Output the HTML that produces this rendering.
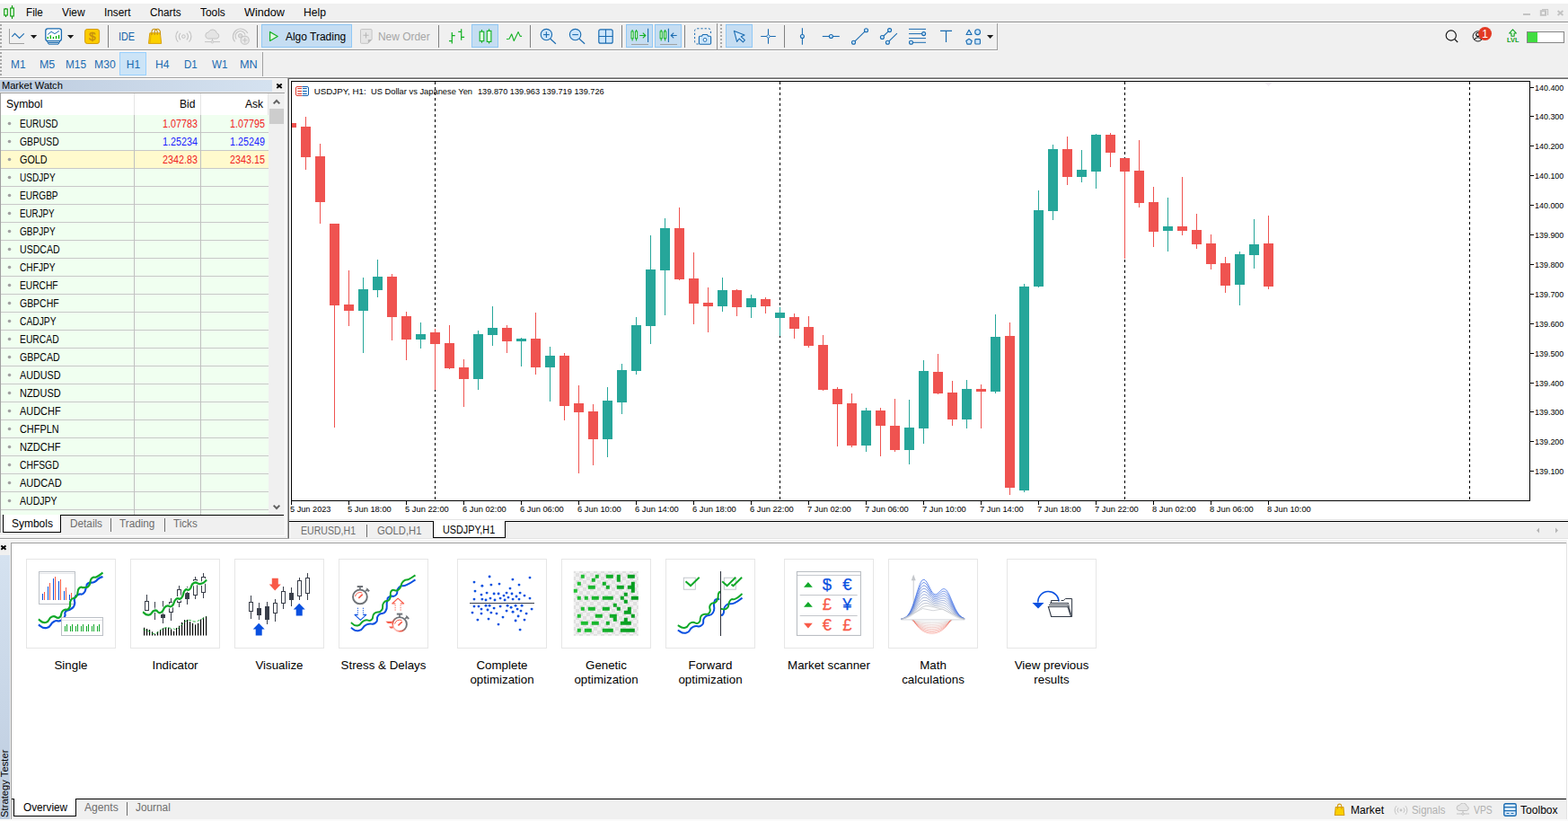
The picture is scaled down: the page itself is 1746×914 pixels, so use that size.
<!DOCTYPE html>
<html lang="en"><head><meta charset="utf-8"><title>MetaTrader 5 - USDJPY,H1</title>
<style>
html,body{margin:0;padding:0}
body{width:1746px;height:914px;overflow:hidden;background:#f0f0f0;position:relative;font-family:"Liberation Sans",sans-serif;}
.r{position:absolute;display:block;overflow:hidden}
.t{position:absolute;white-space:pre;line-height:1;transform-origin:0 0;}
</style></head>
<body>
<div class="r" style="left:0px;top:0px;width:1746px;height:4px;background:#fff;"></div>
<div class="r" style="left:0px;top:24px;width:1746px;height:1px;background:#8e8e8e;"></div>
<div class="r" style="left:0px;top:25px;width:1746px;height:1px;background:#fff;"></div>
<div class="r" style="left:0px;top:55px;width:1111px;height:1px;background:#9a9a9a;"></div>
<div class="r" style="left:0px;top:56px;width:1111px;height:1px;background:#fff;"></div>
<div class="r" style="left:0px;top:85px;width:1746px;height:1px;background:#f7f7f7;"></div>
<div class="r" style="left:0px;top:86px;width:1746px;height:1px;background:#a0a0a0;"></div>
<div class="r" style="left:0px;top:87px;width:320px;height:1px;background:#fff;"></div>
<div class="r" style="left:321px;top:87px;width:1425px;height:1px;background:#696969;"></div>
<svg class="r" style="left:0px;top:0px;" width="20" height="24" viewBox="0 0 20 24"><path d="M6.5 9v1M6.5 17v2M13.5 6v3M13.5 18v3" stroke="#0a9a0a" stroke-width="1.1" fill="none"/><rect x="4.7" y="10" width="3.6" height="7" fill="#e6fbe6" stroke="#0a9a0a" stroke-width="1.1"/><rect x="11.7" y="9" width="3.6" height="9" fill="#e6fbe6" stroke="#0a9a0a" stroke-width="1.1"/></svg>
<span class="t" style="left:29.10px;top:8.24px;font-size:12px;color:#000;transform:scaleX(0.9722);">File</span>
<span class="t" style="left:69.20px;top:8.24px;font-size:12px;color:#000;transform:scaleX(0.9925);">View</span>
<span class="t" style="left:116.20px;top:8.24px;font-size:12px;color:#000;transform:scaleX(0.9863);">Insert</span>
<span class="t" style="left:167.30px;top:8.24px;font-size:12px;color:#000;transform:scaleX(0.9789);">Charts</span>
<span class="t" style="left:223.30px;top:8.24px;font-size:12px;color:#000;transform:scaleX(0.9923);">Tools</span>
<span class="t" style="left:272.10px;top:8.24px;font-size:12px;color:#000;transform:scaleX(1.0543);">Window</span>
<span class="t" style="left:338.40px;top:8.24px;font-size:12px;color:#000;transform:scaleX(1.0129);">Help</span>
<svg class="r" style="left:1696px;top:9px;" width="48" height="10" viewBox="0 0 48 10"><rect x="0" y="6" width="8" height="2" fill="#c3c3c3"/><path d="M21 1.5h6.5v6.5" fill="none" stroke="#c3c3c3" stroke-width="1.2"/><rect x="19.8" y="3.2" width="5.2" height="4.6" fill="none" stroke="#c3c3c3" stroke-width="2"/><path d="M38.6 3l5.8 5M44.4 3l-5.8 5" stroke="#c3c3c3" stroke-width="2" fill="none"/></svg>
<svg class="r" style="left:0px;top:27px;" width="2" height="28" viewBox="0 0 2 28"><rect x="0" y="0" width="2" height="2" fill="#a8a8a8"/><rect x="0" y="4" width="2" height="2" fill="#a8a8a8"/><rect x="0" y="8" width="2" height="2" fill="#a8a8a8"/><rect x="0" y="12" width="2" height="2" fill="#a8a8a8"/><rect x="0" y="16" width="2" height="2" fill="#a8a8a8"/><rect x="0" y="20" width="2" height="2" fill="#a8a8a8"/><rect x="0" y="24" width="2" height="2" fill="#a8a8a8"/></svg>
<svg class="r" style="left:802px;top:27px;" width="2" height="28" viewBox="0 0 2 28"><rect x="0" y="0" width="2" height="2" fill="#a8a8a8"/><rect x="0" y="4" width="2" height="2" fill="#a8a8a8"/><rect x="0" y="8" width="2" height="2" fill="#a8a8a8"/><rect x="0" y="12" width="2" height="2" fill="#a8a8a8"/><rect x="0" y="16" width="2" height="2" fill="#a8a8a8"/><rect x="0" y="20" width="2" height="2" fill="#a8a8a8"/><rect x="0" y="24" width="2" height="2" fill="#a8a8a8"/></svg>
<div class="r" style="left:291px;top:27px;width:101px;height:26px;background:#c5ddf2;box-sizing:border-box;border:1px solid #90c8f6;"></div>
<div class="r" style="left:525px;top:27px;width:30px;height:26px;background:#c5ddf2;box-sizing:border-box;border:1px solid #90c8f6;"></div>
<div class="r" style="left:697px;top:27px;width:30px;height:26px;background:#c5ddf2;box-sizing:border-box;border:1px solid #90c8f6;"></div>
<div class="r" style="left:729px;top:27px;width:30px;height:26px;background:#c5ddf2;box-sizing:border-box;border:1px solid #90c8f6;"></div>
<div class="r" style="left:808px;top:27px;width:30px;height:26px;background:#c5ddf2;box-sizing:border-box;border:1px solid #90c8f6;"></div>
<div class="r" style="left:120px;top:28px;width:1px;height:25px;background:#808080;"></div>
<div class="r" style="left:286px;top:28px;width:1px;height:25px;background:#808080;"></div>
<div class="r" style="left:488px;top:28px;width:1px;height:25px;background:#808080;"></div>
<div class="r" style="left:590px;top:28px;width:1px;height:25px;background:#808080;"></div>
<div class="r" style="left:692px;top:28px;width:1px;height:25px;background:#808080;"></div>
<div class="r" style="left:762px;top:28px;width:1px;height:25px;background:#808080;"></div>
<div class="r" style="left:873px;top:28px;width:1px;height:25px;background:#808080;"></div>
<div class="r" style="left:798px;top:26px;width:1px;height:29px;background:#909090;"></div>
<div class="r" style="left:1110px;top:26px;width:1px;height:29px;background:#a0a0a0;"></div>
<svg class="r" style="left:0;top:26px" width="1746" height="30" viewBox="0 26 1746 30"><path d="M10.5 32v16.5H27" fill="none" stroke="#a0a0a0" stroke-width="1.0"/><path d="M13.3 40.8l3.2-3.4 5.1 5.1 5.2-5.1" fill="none" stroke="#1a6bb0" stroke-width="1.1"/><path d="M34 39h7.2l-3.6 4z" fill="#1a1a1a"/><rect x="50.8" y="31.8" width="17.6" height="13.8" rx="2.6" fill="#fff" stroke="#1a6bb0" stroke-width="1.3"/><path d="M52.3 45.8l1.9 3.4h10.8l1.9-3.4M53.2 47.5h12.8" fill="none" stroke="#1a6bb0" stroke-width="1.0"/><path d="M53.2 38.5l3.8-3.2 4 2.3 4.9-3.2" fill="none" stroke="#1a6bb0" stroke-width="1.0"/><rect x="52.6" y="41" width="1.3" height="2.2" fill="#00b000"/><rect x="55.6" y="39.3" width="1.3" height="3.9" fill="#00b000"/><rect x="58.8" y="41" width="1.3" height="2.2" fill="#00b000"/><rect x="61.9" y="40" width="1.3" height="3.2" fill="#00b000"/><rect x="64.9" y="38.9" width="1.3" height="4.3" fill="#00b000"/><path d="M75 39h7.2l-3.6 4z" fill="#1a1a1a"/><rect x="94.6" y="32.5" width="16" height="16" rx="2.6" fill="#fbcc00" stroke="#d39b12" stroke-width="1.0"/><path d="M166.8 36.8h11.6l1.3 11.6h-14.2z" fill="#fbd000" stroke="#d8a010" stroke-width="1.0"/><path d="M168.3 37l-1.3 11.4" stroke="#e8b400" stroke-width="1.0"/><path d="M169 39v-3.4a3.1 3.3 0 0 1 6.2 0V39M172.2 39v-3.4a3.1 3.3 0 0 1 6.2 0V39" fill="none" stroke="#c8920e" stroke-width="1.1"/><circle cx="204.4" cy="40.6" r="1.8" fill="none" stroke="#c0c0c0" stroke-width="1.0"/><path d="M201 36.8a5.2 5.2 0 0 0 0 7.6M207.8 36.8a5.2 5.2 0 0 1 0 7.6M198.3 34.6a8.6 8.6 0 0 0 0 12M210.5 34.6a8.6 8.6 0 0 1 0 12" fill="none" stroke="#c0c0c0" stroke-width="1.1"/><path d="M231.6 43a3.6 3.6 0 0 1 .5-7.1 4.9 4.9 0 0 1 9.3 1 3.1 3.1 0 0 1-.4 6.1z" fill="#e4e4e4" stroke="#c4c4c4" stroke-width="1.0"/><path d="M236.5 43v3.4M228 46.6h17" stroke="#c4c4c4" stroke-width="1.0"/><circle cx="236.5" cy="46.6" r="1.4" fill="#e4e4e4" stroke="#c4c4c4" stroke-width="0.8"/><circle cx="267.6" cy="39.8" r="2.2" fill="#dcdcdc" stroke="#c4c4c4" stroke-width="1.0"/><path d="M263.2 43.6a5.6 5.6 0 1 1 9.8-5M261.6 46.4a8.6 8.6 0 1 1 14.2-9.4" fill="none" stroke="#c4c4c4" stroke-width="1.1"/><circle cx="272.7" cy="44.7" r="4.6" fill="#e8e8e8" stroke="#c4c4c4" stroke-width="1.1"/><path d="M270 44.7h5.4M272.7 42v5.4" stroke="#c4c4c4" stroke-width="1.1"/><path d="M300.6 35.4l8.6 5-8.6 5z" fill="#e2f6e2" stroke="#10b020" stroke-width="1.2" stroke-linejoin="round"/><path d="M402.5 32.6h10.6a1 1 0 0 1 1 1v10.4l-4.2 4.3h-7.4a1 1 0 0 1-1-1v-13.7a1 1 0 0 1 1-1z" fill="#e6e6e6" stroke="#c4c4c4" stroke-width="1.0"/><path d="M414 44l-4.2 4.3V44z" fill="#b8b8b8"/><path d="M404.4 39.3h6.2M407.5 36.2v6.2" stroke="#b8b8b8" stroke-width="1.1"/><path d="M503.3 36v12.6M500 45.7h3.3M503.3 39.7h3.4M513.7 32.2v12.6M510.3 35.3h3.4M513.7 41.4h3.4" fill="none" stroke="#10b020" stroke-width="1.2"/><path d="M536.5 33v14.7M544.6 32.2v16.4" stroke="#10b020" stroke-width="1.1"/><rect x="534.2" y="35.2" width="4.6" height="10.5" fill="#e0fbe0" stroke="#10b020" stroke-width="1.1"/><rect x="542.3" y="34.4" width="4.6" height="12" fill="#e0fbe0" stroke="#10b020" stroke-width="1.1"/><path d="M564 43.5l3 -.3 2.7-5.3 2.6 7.6 4.8-9.9 2 4.5 2 .3" fill="none" stroke="#10b020" stroke-width="1.1" stroke-linejoin="round"/><path d="M612.9 43.3l6 5.4" stroke="#1a6bb0" stroke-width="1.2"/><circle cx="608.4" cy="38.6" r="6.2" fill="#cde6fb" stroke="#1a6bb0" stroke-width="1.1"/><path d="M605.1 38.6h6.6" stroke="#1a6bb0" stroke-width="1.1"/><path d="M608.4 35.3v6.6" stroke="#1a6bb0" stroke-width="1.1"/><path d="M645.1 43.3l6 5.4" stroke="#1a6bb0" stroke-width="1.2"/><circle cx="640.6" cy="38.6" r="6.2" fill="#cde6fb" stroke="#1a6bb0" stroke-width="1.1"/><path d="M637.3000000000001 38.6h6.6" stroke="#1a6bb0" stroke-width="1.1"/><rect x="666.8" y="32.8" width="15.4" height="15.4" rx="2" fill="#cde6fb" stroke="#1a6bb0" stroke-width="1.2"/><path d="M674.5 33v15M667 40.5h15" stroke="#1a6bb0" stroke-width="1.1"/><path d="M704.1 33v12.5M708.6 33v12.5" stroke="#10b020" stroke-width="1"/><rect x="703.0" y="35" width="2.2" height="7.8" fill="#e0fbe0" stroke="#10b020" stroke-width="0.95"/><rect x="707.5" y="35" width="2.2" height="7.8" fill="#e0fbe0" stroke="#10b020" stroke-width="0.95"/><path d="M712.3 39.5h6.3M715.8 36.6l3 2.9-3 2.9" fill="none" stroke="#10b020" stroke-width="1.1"/><path d="M721.6 31.8v15.2" stroke="#1a6bb0" stroke-width="1.1"/><path d="M703 49.5h19" stroke="#a0a0a0" stroke-width="1.0"/><path d="M736.2 33v12.5M740.6 33v12.5" stroke="#10b020" stroke-width="1"/><rect x="735.1" y="35" width="2.2" height="7.8" fill="#e0fbe0" stroke="#10b020" stroke-width="0.95"/><rect x="739.5" y="35" width="2.2" height="7.8" fill="#e0fbe0" stroke="#10b020" stroke-width="0.95"/><path d="M744.4 31.8v15.2" stroke="#1a6bb0" stroke-width="1.1"/><path d="M747.2 39.5h6.5M750.2 36.6l-3 2.9 3 2.9" fill="none" stroke="#1a6bb0" stroke-width="1.1"/><path d="M735 49.5h19" stroke="#a0a0a0" stroke-width="1.0"/><path d="M777.6 49h-1.6a2.4 2.4 0 0 1-2.4-2.4v-12.4a2.4 2.4 0 0 1 2.4-2.4h13a2.4 2.4 0 0 1 2.4 2.4v3.6" fill="none" stroke="#1a6bb0" stroke-width="1.0" stroke-dasharray="2.2 2"/><path d="M779.6 49.2a1.2 1.2 0 0 1-1.2-1.2v-6.6a1.2 1.2 0 0 1 1.2-1.2h1.8l1.3-1.7h4.6l1.3 1.7h1.8a1.2 1.2 0 0 1 1.2 1.2v6.6a1.2 1.2 0 0 1-1.2 1.2z" fill="#cde6fb" stroke="#1a6bb0" stroke-width="1.1"/><circle cx="785" cy="44.4" r="1.9" fill="#fff" stroke="#1a6bb0" stroke-width="1.0"/><path d="M817.4 34.4l3.2 12 2.6-3.4 4.2 3.8 2-2.2-4.2-3.8 3.8-1.8z" fill="#cde6fb" stroke="#1a6bb0" stroke-width="1.1" stroke-linejoin="round"/><path d="M847.2 40.5h16.6M855.5 32.2v16.6" stroke="#1a6bb0" stroke-width="1.1"/><path d="M855.5 38.3l2.2 2.2-2.2 2.2-2.2-2.2z" fill="#cde6fb" stroke="#1a6bb0" stroke-width="1.0"/><path d="M893.4 31.2v18.6" stroke="#1a6bb0" stroke-width="1.1"/><circle cx="893.4" cy="40.5" r="2" fill="#cde6fb" stroke="#1a6bb0" stroke-width="1.1"/><path d="M915.8 40.5h19" stroke="#1a6bb0" stroke-width="1.1"/><circle cx="925.4" cy="40.5" r="2" fill="#cde6fb" stroke="#1a6bb0" stroke-width="1.1"/><path d="M950.5 47.3l14-13.6" stroke="#1a6bb0" stroke-width="1.1"/><circle cx="950.5" cy="47.3" r="2" fill="#cde6fb" stroke="#1a6bb0" stroke-width="1.1"/><circle cx="964.5" cy="33.7" r="2" fill="#cde6fb" stroke="#1a6bb0" stroke-width="1.1"/><path d="M982.4 41.5l8.2-7.9M988.4 47.3l10.5-10.1" stroke="#1a6bb0" stroke-width="1.1"/><circle cx="982.4" cy="41.5" r="2" fill="#cde6fb" stroke="#1a6bb0" stroke-width="1.1"/><circle cx="990.6" cy="33.6" r="2" fill="#cde6fb" stroke="#1a6bb0" stroke-width="1.1"/><circle cx="988.4" cy="47.3" r="2" fill="#cde6fb" stroke="#1a6bb0" stroke-width="1.1"/><path d="M1012 32.4h19M1012 37.6h19M1012 42.6h19M1012 47.3h19" stroke="#1a6bb0" stroke-width="1.0"/><circle cx="1028.6" cy="37.6" r="2" fill="#cde6fb" stroke="#1a6bb0" stroke-width="1.1"/><circle cx="1014.5" cy="47.3" r="2" fill="#cde6fb" stroke="#1a6bb0" stroke-width="1.1"/><path d="M1047 34.4h13M1053.5 34.4v12.6" stroke="#1a6bb0" stroke-width="1.2"/><path d="M1079 33.2l3 5.3h-6z" fill="#cde6fb" stroke="#1a6bb0" stroke-width="1.1" stroke-linejoin="round"/><circle cx="1088.6" cy="35.7" r="2.9" fill="#cde6fb" stroke="#1a6bb0" stroke-width="1.1"/><path d="M1079 43.2l3.2 2.3-1.2 3.6h-4l-1.2-3.6z" fill="#cde6fb" stroke="#1a6bb0" stroke-width="1.1" stroke-linejoin="round"/><rect x="1085.8" y="43.6" width="5.6" height="5.4" rx=".8" fill="#cde6fb" stroke="#1a6bb0" stroke-width="1.1"/><path d="M1099 39h7.2l-3.6 4z" fill="#1a1a1a"/><circle cx="1615.8" cy="39.5" r="5.6" fill="none" stroke="#111" stroke-width="1.1"/><path d="M1619.8 43.6l3.4 3.4" stroke="#111" stroke-width="1.2"/><circle cx="1645.7" cy="40.4" r="5.6" fill="none" stroke="#111" stroke-width="1.0"/><circle cx="1645.7" cy="38.5" r="2" fill="none" stroke="#111" stroke-width="1.1"/><path d="M1641.6 44.2a4.6 4.6 0 0 1 8.2 0" fill="none" stroke="#111" stroke-width="1.1"/><circle cx="1653.6" cy="37.5" r="7.4" fill="#e23a24"/><path d="M1684.5 32.8l3.9 4.2h-2.3v3.2h-3.2V37h-2.3z" fill="#e0fbe0" stroke="#10a020" stroke-width="1.1" stroke-linejoin="round"/><rect x="1700.5" y="35.5" width="41" height="12" fill="#fff" stroke="#858585" stroke-width="1.0"/><rect x="1701" y="36" width="11" height="11" fill="#40dd40"/></svg>
<span class="t" style="left:98.95px;top:33.91px;font-size:13.5px;color:#c58c10;-webkit-text-stroke:0.35px #c58c10;">$</span>
<span class="t" style="left:131.80px;top:34.64px;font-size:12px;color:#1563a8;transform:scaleX(0.9048);">IDE</span>
<span class="t" style="left:317.90px;top:34.64px;font-size:12px;color:#000;">Algo Trading</span>
<span class="t" style="left:421.40px;top:34.64px;font-size:12px;color:#a6a6a6;transform:scaleX(0.9946);">New Order</span>
<span class="t" style="left:1650.26px;top:31.74px;font-size:12px;color:#fff;">1</span>
<span class="t" style="left:1678.20px;top:40.99px;font-size:8px;color:#10a020;transform:scaleX(0.9231);font-weight:bold;">LVL</span>
<svg class="r" style="left:0px;top:58px;" width="2" height="28" viewBox="0 0 2 28"><rect x="0" y="0" width="2" height="2" fill="#a8a8a8"/><rect x="0" y="4" width="2" height="2" fill="#a8a8a8"/><rect x="0" y="8" width="2" height="2" fill="#a8a8a8"/><rect x="0" y="12" width="2" height="2" fill="#a8a8a8"/><rect x="0" y="16" width="2" height="2" fill="#a8a8a8"/><rect x="0" y="20" width="2" height="2" fill="#a8a8a8"/><rect x="0" y="24" width="2" height="2" fill="#a8a8a8"/></svg>
<div class="r" style="left:133px;top:58px;width:30px;height:26px;background:#cce4f7;box-sizing:border-box;border:1px solid #99d1ff;"></div>
<span class="t" style="left:12.20px;top:65.64px;font-size:12px;color:#1a6bb0;transform:scaleX(0.9958);">M1</span>
<span class="t" style="left:43.85px;top:65.64px;font-size:12px;color:#1a6bb0;transform:scaleX(1.0378);">M5</span>
<span class="t" style="left:73.00px;top:65.64px;font-size:12px;color:#1a6bb0;transform:scaleX(0.9852);">M15</span>
<span class="t" style="left:104.65px;top:65.64px;font-size:12px;color:#1a6bb0;transform:scaleX(1.0152);">M30</span>
<span class="t" style="left:140.85px;top:65.64px;font-size:12px;color:#1a6bb0;">H1</span>
<span class="t" style="left:172.75px;top:65.64px;font-size:12px;color:#1a6bb0;transform:scaleX(1.0104);">H4</span>
<span class="t" style="left:205.10px;top:65.64px;font-size:12px;color:#1a6bb0;transform:scaleX(0.9648);">D1</span>
<span class="t" style="left:235.80px;top:65.64px;font-size:12px;color:#1a6bb0;transform:scaleX(0.9667);">W1</span>
<span class="t" style="left:266.60px;top:65.64px;font-size:12px;color:#1a6bb0;transform:scaleX(1.0609);">MN</span>
<div class="r" style="left:292px;top:58px;width:1px;height:27px;background:#a0a0a0;"></div>
<div class="r" style="left:322px;top:88px;width:1424px;height:490px;background:#fff;"></div>
<svg class="r" style="left:322px;top:88px;shape-rendering:crispEdges;" width="1424" height="490" viewBox="0 0 1424 490"><line x1="162.5" y1="3" x2="162.5" y2="469" stroke="#000" stroke-width="1" stroke-dasharray="3 3"/><line x1="546.5" y1="3" x2="546.5" y2="469" stroke="#000" stroke-width="1" stroke-dasharray="3 3"/><line x1="930.5" y1="3" x2="930.5" y2="469" stroke="#000" stroke-width="1" stroke-dasharray="3 3"/><line x1="1314.5" y1="3" x2="1314.5" y2="469" stroke="#000" stroke-width="1" stroke-dasharray="3 3"/><rect x="3" y="49" width="5" height="5" fill="#ef5350"/><rect x="18" y="42" width="1" height="59" fill="#ef5350"/><rect x="13" y="53" width="11" height="34" fill="#ef5350"/><rect x="34" y="72" width="1" height="89" fill="#ef5350"/><rect x="29" y="86" width="11" height="51" fill="#ef5350"/><rect x="50" y="161" width="1" height="227" fill="#ef5350"/><rect x="45" y="161" width="11" height="91" fill="#ef5350"/><rect x="66" y="213" width="1" height="62" fill="#ef5350"/><rect x="61" y="251" width="11" height="7" fill="#ef5350"/><rect x="82" y="221" width="1" height="84" fill="#26a69a"/><rect x="77" y="234" width="11" height="24" fill="#26a69a"/><rect x="98" y="201" width="1" height="42" fill="#26a69a"/><rect x="93" y="220" width="11" height="15" fill="#26a69a"/><rect x="114" y="217" width="1" height="74" fill="#ef5350"/><rect x="109" y="220" width="11" height="45" fill="#ef5350"/><rect x="130" y="259" width="1" height="54" fill="#ef5350"/><rect x="125" y="264" width="11" height="26" fill="#ef5350"/><rect x="146" y="271" width="1" height="29" fill="#26a69a"/><rect x="141" y="284" width="11" height="6" fill="#26a69a"/><rect x="162" y="278" width="1" height="68" fill="#ef5350"/><rect x="157" y="282" width="11" height="13" fill="#ef5350"/><rect x="178" y="274" width="1" height="49" fill="#ef5350"/><rect x="173" y="294" width="11" height="28" fill="#ef5350"/><rect x="194" y="312" width="1" height="53" fill="#ef5350"/><rect x="189" y="321" width="11" height="13" fill="#ef5350"/><rect x="210" y="280" width="1" height="66" fill="#26a69a"/><rect x="205" y="284" width="11" height="50" fill="#26a69a"/><rect x="226" y="253" width="1" height="44" fill="#26a69a"/><rect x="221" y="277" width="11" height="8" fill="#26a69a"/><rect x="242" y="274" width="1" height="31" fill="#ef5350"/><rect x="237" y="277" width="11" height="15" fill="#ef5350"/><rect x="258" y="288" width="1" height="32" fill="#26a69a"/><rect x="253" y="289" width="11" height="3" fill="#26a69a"/><rect x="274" y="260" width="1" height="69" fill="#ef5350"/><rect x="269" y="289" width="11" height="32" fill="#ef5350"/><rect x="290" y="298" width="1" height="61" fill="#26a69a"/><rect x="285" y="308" width="11" height="13" fill="#26a69a"/><rect x="306" y="305" width="1" height="75" fill="#ef5350"/><rect x="301" y="308" width="11" height="56" fill="#ef5350"/><rect x="322" y="341" width="1" height="98" fill="#ef5350"/><rect x="317" y="361" width="11" height="10" fill="#ef5350"/><rect x="338" y="362" width="1" height="68" fill="#ef5350"/><rect x="333" y="370" width="11" height="31" fill="#ef5350"/><rect x="354" y="343" width="1" height="78" fill="#26a69a"/><rect x="349" y="358" width="11" height="43" fill="#26a69a"/><rect x="370" y="317" width="1" height="56" fill="#26a69a"/><rect x="365" y="324" width="11" height="36" fill="#26a69a"/><rect x="386" y="265" width="1" height="64" fill="#26a69a"/><rect x="381" y="274" width="11" height="51" fill="#26a69a"/><rect x="402" y="174" width="1" height="121" fill="#26a69a"/><rect x="397" y="212" width="11" height="63" fill="#26a69a"/><rect x="418" y="155" width="1" height="108" fill="#26a69a"/><rect x="413" y="166" width="11" height="47" fill="#26a69a"/><rect x="434" y="143" width="1" height="81" fill="#ef5350"/><rect x="429" y="166" width="11" height="57" fill="#ef5350"/><rect x="450" y="193" width="1" height="80" fill="#ef5350"/><rect x="445" y="222" width="11" height="28" fill="#ef5350"/><rect x="466" y="232" width="1" height="50" fill="#ef5350"/><rect x="461" y="249" width="11" height="4" fill="#ef5350"/><rect x="482" y="221" width="1" height="38" fill="#26a69a"/><rect x="477" y="235" width="11" height="18" fill="#26a69a"/><rect x="498" y="234" width="1" height="30" fill="#ef5350"/><rect x="493" y="235" width="11" height="19" fill="#ef5350"/><rect x="514" y="240" width="1" height="26" fill="#26a69a"/><rect x="509" y="244" width="11" height="10" fill="#26a69a"/><rect x="530" y="243" width="1" height="18" fill="#ef5350"/><rect x="525" y="245" width="11" height="8" fill="#ef5350"/><rect x="546" y="254" width="1" height="32" fill="#26a69a"/><rect x="541" y="260" width="11" height="6" fill="#26a69a"/><rect x="562" y="261" width="1" height="28" fill="#ef5350"/><rect x="557" y="265" width="11" height="13" fill="#ef5350"/><rect x="578" y="264" width="1" height="35" fill="#ef5350"/><rect x="573" y="276" width="11" height="21" fill="#ef5350"/><rect x="594" y="285" width="1" height="62" fill="#ef5350"/><rect x="589" y="296" width="11" height="50" fill="#ef5350"/><rect x="610" y="343" width="1" height="66" fill="#ef5350"/><rect x="605" y="345" width="11" height="17" fill="#ef5350"/><rect x="626" y="350" width="1" height="60" fill="#ef5350"/><rect x="621" y="361" width="11" height="47" fill="#ef5350"/><rect x="642" y="366" width="1" height="49" fill="#26a69a"/><rect x="637" y="369" width="11" height="39" fill="#26a69a"/><rect x="658" y="366" width="1" height="54" fill="#ef5350"/><rect x="653" y="369" width="11" height="17" fill="#ef5350"/><rect x="674" y="356" width="1" height="59" fill="#ef5350"/><rect x="669" y="386" width="11" height="27" fill="#ef5350"/><rect x="690" y="357" width="1" height="72" fill="#26a69a"/><rect x="685" y="388" width="11" height="25" fill="#26a69a"/><rect x="706" y="313" width="1" height="93" fill="#26a69a"/><rect x="701" y="325" width="11" height="64" fill="#26a69a"/><rect x="722" y="306" width="1" height="45" fill="#ef5350"/><rect x="717" y="326" width="11" height="24" fill="#ef5350"/><rect x="738" y="336" width="1" height="50" fill="#ef5350"/><rect x="733" y="349" width="11" height="30" fill="#ef5350"/><rect x="754" y="335" width="1" height="54" fill="#26a69a"/><rect x="749" y="345" width="11" height="34" fill="#26a69a"/><rect x="770" y="340" width="1" height="49" fill="#ef5350"/><rect x="765" y="345" width="11" height="3" fill="#ef5350"/><rect x="786" y="262" width="1" height="88" fill="#26a69a"/><rect x="781" y="287" width="11" height="61" fill="#26a69a"/><rect x="802" y="271" width="1" height="192" fill="#ef5350"/><rect x="797" y="286" width="11" height="169" fill="#ef5350"/><rect x="818" y="228" width="1" height="232" fill="#26a69a"/><rect x="813" y="231" width="11" height="227" fill="#26a69a"/><rect x="834" y="124" width="1" height="108" fill="#26a69a"/><rect x="829" y="146" width="11" height="85" fill="#26a69a"/><rect x="850" y="73" width="1" height="84" fill="#26a69a"/><rect x="845" y="78" width="11" height="69" fill="#26a69a"/><rect x="866" y="64" width="1" height="54" fill="#ef5350"/><rect x="861" y="78" width="11" height="31" fill="#ef5350"/><rect x="882" y="79" width="1" height="36" fill="#26a69a"/><rect x="877" y="101" width="11" height="8" fill="#26a69a"/><rect x="898" y="61" width="1" height="61" fill="#26a69a"/><rect x="893" y="62" width="11" height="41" fill="#26a69a"/><rect x="914" y="60" width="1" height="38" fill="#ef5350"/><rect x="909" y="62" width="11" height="20" fill="#ef5350"/><rect x="930" y="88" width="1" height="112" fill="#ef5350"/><rect x="925" y="88" width="11" height="15" fill="#ef5350"/><rect x="946" y="68" width="1" height="75" fill="#ef5350"/><rect x="941" y="102" width="11" height="36" fill="#ef5350"/><rect x="962" y="120" width="1" height="67" fill="#ef5350"/><rect x="957" y="137" width="11" height="33" fill="#ef5350"/><rect x="978" y="132" width="1" height="60" fill="#26a69a"/><rect x="973" y="164" width="11" height="5" fill="#26a69a"/><rect x="994" y="109" width="1" height="65" fill="#ef5350"/><rect x="989" y="164" width="11" height="5" fill="#ef5350"/><rect x="1010" y="150" width="1" height="39" fill="#ef5350"/><rect x="1005" y="168" width="11" height="16" fill="#ef5350"/><rect x="1026" y="173" width="1" height="39" fill="#ef5350"/><rect x="1021" y="183" width="11" height="23" fill="#ef5350"/><rect x="1042" y="198" width="1" height="40" fill="#ef5350"/><rect x="1037" y="205" width="11" height="25" fill="#ef5350"/><rect x="1058" y="192" width="1" height="60" fill="#26a69a"/><rect x="1053" y="195" width="11" height="34" fill="#26a69a"/><rect x="1074" y="156" width="1" height="55" fill="#26a69a"/><rect x="1069" y="184" width="11" height="12" fill="#26a69a"/><rect x="1090" y="152" width="1" height="82" fill="#ef5350"/><rect x="1085" y="183" width="11" height="48" fill="#ef5350"/><path d="M1087 4h7l-3.5 4z" fill="#f4eff6"/><rect x="2.5" y="2.5" width="1379" height="467" fill="none" stroke="#000" stroke-width="1"/><rect x="1382" y="9" width="4" height="1" fill="#000"/><rect x="1382" y="41" width="4" height="1" fill="#000"/><rect x="1382" y="74" width="4" height="1" fill="#000"/><rect x="1382" y="107" width="4" height="1" fill="#000"/><rect x="1382" y="140" width="4" height="1" fill="#000"/><rect x="1382" y="173" width="4" height="1" fill="#000"/><rect x="1382" y="206" width="4" height="1" fill="#000"/><rect x="1382" y="239" width="4" height="1" fill="#000"/><rect x="1382" y="272" width="4" height="1" fill="#000"/><rect x="1382" y="305" width="4" height="1" fill="#000"/><rect x="1382" y="338" width="4" height="1" fill="#000"/><rect x="1382" y="370" width="4" height="1" fill="#000"/><rect x="1382" y="403" width="4" height="1" fill="#000"/><rect x="1382" y="436" width="4" height="1" fill="#000"/><rect x="2" y="470" width="1" height="4" fill="#000"/><rect x="66" y="470" width="1" height="4" fill="#000"/><rect x="130" y="470" width="1" height="4" fill="#000"/><rect x="194" y="470" width="1" height="4" fill="#000"/><rect x="258" y="470" width="1" height="4" fill="#000"/><rect x="322" y="470" width="1" height="4" fill="#000"/><rect x="386" y="470" width="1" height="4" fill="#000"/><rect x="450" y="470" width="1" height="4" fill="#000"/><rect x="514" y="470" width="1" height="4" fill="#000"/><rect x="578" y="470" width="1" height="4" fill="#000"/><rect x="642" y="470" width="1" height="4" fill="#000"/><rect x="706" y="470" width="1" height="4" fill="#000"/><rect x="770" y="470" width="1" height="4" fill="#000"/><rect x="834" y="470" width="1" height="4" fill="#000"/><rect x="898" y="470" width="1" height="4" fill="#000"/><rect x="962" y="470" width="1" height="4" fill="#000"/><rect x="1026" y="470" width="1" height="4" fill="#000"/><rect x="1090" y="470" width="1" height="4" fill="#000"/></svg>
<span class="t" style="left:1709.30px;top:92.71px;font-size:9.8px;color:#000;transform:scaleX(0.9118);">140.400</span>
<span class="t" style="left:1709.30px;top:124.71px;font-size:9.8px;color:#000;transform:scaleX(0.9118);">140.300</span>
<span class="t" style="left:1709.30px;top:157.71px;font-size:9.8px;color:#000;transform:scaleX(0.9118);">140.200</span>
<span class="t" style="left:1709.30px;top:190.71px;font-size:9.8px;color:#000;transform:scaleX(0.9118);">140.100</span>
<span class="t" style="left:1709.30px;top:223.71px;font-size:9.8px;color:#000;transform:scaleX(0.9118);">140.000</span>
<span class="t" style="left:1709.30px;top:256.71px;font-size:9.8px;color:#000;transform:scaleX(0.9118);">139.900</span>
<span class="t" style="left:1709.30px;top:289.71px;font-size:9.8px;color:#000;transform:scaleX(0.9118);">139.800</span>
<span class="t" style="left:1709.30px;top:322.71px;font-size:9.8px;color:#000;transform:scaleX(0.9118);">139.700</span>
<span class="t" style="left:1709.30px;top:355.71px;font-size:9.8px;color:#000;transform:scaleX(0.9118);">139.600</span>
<span class="t" style="left:1709.30px;top:388.71px;font-size:9.8px;color:#000;transform:scaleX(0.9118);">139.500</span>
<span class="t" style="left:1709.30px;top:421.71px;font-size:9.8px;color:#000;transform:scaleX(0.9118);">139.400</span>
<span class="t" style="left:1709.30px;top:453.71px;font-size:9.8px;color:#000;transform:scaleX(0.9118);">139.300</span>
<span class="t" style="left:1709.30px;top:486.71px;font-size:9.8px;color:#000;transform:scaleX(0.9118);">139.200</span>
<span class="t" style="left:1709.30px;top:519.71px;font-size:9.8px;color:#000;transform:scaleX(0.9118);">139.100</span>
<span class="t" style="left:323.30px;top:561.81px;font-size:9.8px;color:#000;transform:scaleX(0.9382);">5 Jun 2023</span>
<span class="t" style="left:387.30px;top:561.81px;font-size:9.8px;color:#000;transform:scaleX(0.9527);">5 Jun 18:00</span>
<span class="t" style="left:451.30px;top:561.81px;font-size:9.8px;color:#000;transform:scaleX(0.9527);">5 Jun 22:00</span>
<span class="t" style="left:515.30px;top:561.81px;font-size:9.8px;color:#000;transform:scaleX(0.9527);">6 Jun 02:00</span>
<span class="t" style="left:579.30px;top:561.81px;font-size:9.8px;color:#000;transform:scaleX(0.9527);">6 Jun 06:00</span>
<span class="t" style="left:643.30px;top:561.81px;font-size:9.8px;color:#000;transform:scaleX(0.9527);">6 Jun 10:00</span>
<span class="t" style="left:707.30px;top:561.81px;font-size:9.8px;color:#000;transform:scaleX(0.9527);">6 Jun 14:00</span>
<span class="t" style="left:771.30px;top:561.81px;font-size:9.8px;color:#000;transform:scaleX(0.9527);">6 Jun 18:00</span>
<span class="t" style="left:835.30px;top:561.81px;font-size:9.8px;color:#000;transform:scaleX(0.9527);">6 Jun 22:00</span>
<span class="t" style="left:899.30px;top:561.81px;font-size:9.8px;color:#000;transform:scaleX(0.9527);">7 Jun 02:00</span>
<span class="t" style="left:963.30px;top:561.81px;font-size:9.8px;color:#000;transform:scaleX(0.9527);">7 Jun 06:00</span>
<span class="t" style="left:1027.30px;top:561.81px;font-size:9.8px;color:#000;transform:scaleX(0.9527);">7 Jun 10:00</span>
<span class="t" style="left:1091.30px;top:561.81px;font-size:9.8px;color:#000;transform:scaleX(0.9527);">7 Jun 14:00</span>
<span class="t" style="left:1155.30px;top:561.81px;font-size:9.8px;color:#000;transform:scaleX(0.9527);">7 Jun 18:00</span>
<span class="t" style="left:1219.30px;top:561.81px;font-size:9.8px;color:#000;transform:scaleX(0.9527);">7 Jun 22:00</span>
<span class="t" style="left:1283.30px;top:561.81px;font-size:9.8px;color:#000;transform:scaleX(0.9527);">8 Jun 02:00</span>
<span class="t" style="left:1347.30px;top:561.81px;font-size:9.8px;color:#000;transform:scaleX(0.9527);">8 Jun 06:00</span>
<span class="t" style="left:1411.30px;top:561.81px;font-size:9.8px;color:#000;transform:scaleX(0.9527);">8 Jun 10:00</span>
<svg class="r" style="left:329px;top:96px;" width="15" height="11" viewBox="0 0 15 11"><rect x="1" y="1" width="13" height="9" fill="#fff"/><rect x="2" y="2" width="5.5" height="7" fill="#fdeee8"/><rect x="7.5" y="2" width="5.5" height="7" fill="#d8f1ff"/><path d="M7.5 0.5H2A1.5 1.5 0 0 0 .5 2v7A1.5 1.5 0 0 0 2 10.5H7.5" fill="none" stroke="#e03c32"/><path d="M7.5 0.5H13A1.5 1.5 0 0 1 14.5 2v7A1.5 1.5 0 0 1 13 10.5H7.5" fill="none" stroke="#1160b0"/><path d="M2.3 2.5h4.7M2.3 5.5h4.7M2.3 8.5h4.7" stroke="#e03c32" stroke-width="1"/><path d="M8 2.5h4.7M8 5.5h4.7M8 8.5h4.7" stroke="#1160b0" stroke-width="1"/></svg>
<span class="t" style="left:349.70px;top:97.31px;font-size:9.8px;color:#000;">USDJPY, H1:</span>
<span class="t" style="left:412.60px;top:97.31px;font-size:9.8px;color:#000;transform:scaleX(0.9523);">US Dollar vs Japanese Yen</span>
<span class="t" style="left:532.10px;top:97.31px;font-size:9.8px;color:#000;transform:scaleX(0.9388);">139.870 139.963 139.719 139.726</span>
<div class="r" style="left:322px;top:578px;width:1424px;height:1px;background:#e3e3e3;"></div>
<div class="r" style="left:322px;top:579px;width:1424px;height:1px;background:#fff;"></div>
<div class="r" style="left:322px;top:581px;width:1424px;height:18px;background:#f0f0f0;"></div>
<div class="r" style="left:322px;top:581px;width:1px;height:18px;background:#fff;"></div>
<div class="r" style="left:322px;top:580px;width:1424px;height:1px;background:#000;"></div>
<div class="r" style="left:482px;top:580px;width:81px;height:19px;background:#fff;box-sizing:border-box;border:1px solid #000;border-top:none;"></div>
<span class="t" style="left:334.90px;top:584.54px;font-size:12px;color:#6d6d6d;transform:scaleX(0.8796);">EURUSD,H1</span>
<div class="r" style="left:408px;top:584px;width:1px;height:14px;background:#6d6d6d;"></div>
<span class="t" style="left:420.20px;top:584.54px;font-size:12px;color:#6d6d6d;transform:scaleX(0.9377);">GOLD,H1</span>
<span class="t" style="left:493.30px;top:584.04px;font-size:12px;color:#000;transform:scaleX(0.9027);">USDJPY,H1</span>
<svg class="r" style="left:1710px;top:587px;" width="26" height="8" viewBox="0 0 26 8"><path d="M4 0.5v6L1 3.5z M22 0.5v6l3-3z" fill="#b4b4b4"/></svg>
<div class="r" style="left:322px;top:599px;width:1424px;height:1px;background:#e3e3e3;"></div>
<div class="r" style="left:0px;top:89px;width:303px;height:13px;background:linear-gradient(90deg,#bdccdf,#d5e2f0);"></div>
<span class="t" style="left:2.20px;top:89.53px;font-size:11px;color:#000;transform:scaleX(1.0053);">Market Watch</span>
<svg class="r" style="left:307px;top:92px;" width="8" height="8" viewBox="0 0 8 8"><path d="M1.3 1.5l5.4 4.4M6.7 1.5l-5.4 4.4" stroke="#000" stroke-width="1.9"/></svg>
<div class="r" style="left:0px;top:103px;width:317px;height:1px;background:#a0a0a0;"></div>
<div class="r" style="left:0px;top:103px;width:1px;height:490px;background:#a0a0a0;"></div>
<div class="r" style="left:1px;top:104px;width:298px;height:24px;background:#fff;"></div>
<div class="r" style="left:149px;top:104px;width:1px;height:24px;background:#e5e5e5;"></div>
<div class="r" style="left:223px;top:104px;width:1px;height:24px;background:#e5e5e5;"></div>
<div class="r" style="left:298px;top:104px;width:1px;height:24px;background:#e5e5e5;"></div>
<span class="t" style="left:7.10px;top:109.84px;font-size:12px;color:#000;transform:scaleX(1.0096);">Symbol</span>
<span class="t" style="left:200.40px;top:109.84px;font-size:12px;color:#000;transform:scaleX(1.0090);">Bid</span>
<span class="t" style="left:273.00px;top:109.84px;font-size:12px;color:#000;">Ask</span>
<div class="r" style="left:1px;top:128px;width:298px;height:445px;background:#f0fff0;"></div>
<div class="r" style="left:1px;top:168px;width:298px;height:19px;background:#fffacd;"></div>
<svg class="r" style="left:1px;top:128px;" width="298" height="445" viewBox="0 0 298 445"><rect x="0" y="19" width="298" height="1" fill="#c8c8c8"/><rect x="0" y="39" width="298" height="1" fill="#c8c8c8"/><rect x="0" y="59" width="298" height="1" fill="#c8c8c8"/><rect x="0" y="79" width="298" height="1" fill="#c8c8c8"/><rect x="0" y="99" width="298" height="1" fill="#c8c8c8"/><rect x="0" y="119" width="298" height="1" fill="#c8c8c8"/><rect x="0" y="139" width="298" height="1" fill="#c8c8c8"/><rect x="0" y="159" width="298" height="1" fill="#c8c8c8"/><rect x="0" y="179" width="298" height="1" fill="#c8c8c8"/><rect x="0" y="199" width="298" height="1" fill="#c8c8c8"/><rect x="0" y="219" width="298" height="1" fill="#c8c8c8"/><rect x="0" y="239" width="298" height="1" fill="#c8c8c8"/><rect x="0" y="259" width="298" height="1" fill="#c8c8c8"/><rect x="0" y="279" width="298" height="1" fill="#c8c8c8"/><rect x="0" y="299" width="298" height="1" fill="#c8c8c8"/><rect x="0" y="319" width="298" height="1" fill="#c8c8c8"/><rect x="0" y="339" width="298" height="1" fill="#c8c8c8"/><rect x="0" y="359" width="298" height="1" fill="#c8c8c8"/><rect x="0" y="379" width="298" height="1" fill="#c8c8c8"/><rect x="0" y="399" width="298" height="1" fill="#c8c8c8"/><rect x="0" y="419" width="298" height="1" fill="#c8c8c8"/><rect x="0" y="439" width="298" height="1" fill="#c8c8c8"/><rect x="148" y="0" width="1" height="445" fill="#c0c0c0"/><rect x="222" y="0" width="1" height="445" fill="#c0c0c0"/><circle cx="9.5" cy="9.5" r="1.8" fill="#a0a0a0"/><circle cx="9.5" cy="29.5" r="1.8" fill="#a0a0a0"/><circle cx="9.5" cy="49.5" r="1.8" fill="#a0a0a0"/><circle cx="9.5" cy="69.5" r="1.8" fill="#a0a0a0"/><circle cx="9.5" cy="89.5" r="1.8" fill="#a0a0a0"/><circle cx="9.5" cy="109.5" r="1.8" fill="#a0a0a0"/><circle cx="9.5" cy="129.5" r="1.8" fill="#a0a0a0"/><circle cx="9.5" cy="149.5" r="1.8" fill="#a0a0a0"/><circle cx="9.5" cy="169.5" r="1.8" fill="#a0a0a0"/><circle cx="9.5" cy="189.5" r="1.8" fill="#a0a0a0"/><circle cx="9.5" cy="209.5" r="1.8" fill="#a0a0a0"/><circle cx="9.5" cy="229.5" r="1.8" fill="#a0a0a0"/><circle cx="9.5" cy="249.5" r="1.8" fill="#a0a0a0"/><circle cx="9.5" cy="269.5" r="1.8" fill="#a0a0a0"/><circle cx="9.5" cy="289.5" r="1.8" fill="#a0a0a0"/><circle cx="9.5" cy="309.5" r="1.8" fill="#a0a0a0"/><circle cx="9.5" cy="329.5" r="1.8" fill="#a0a0a0"/><circle cx="9.5" cy="349.5" r="1.8" fill="#a0a0a0"/><circle cx="9.5" cy="369.5" r="1.8" fill="#a0a0a0"/><circle cx="9.5" cy="389.5" r="1.8" fill="#a0a0a0"/><circle cx="9.5" cy="409.5" r="1.8" fill="#a0a0a0"/><circle cx="9.5" cy="429.5" r="1.8" fill="#a0a0a0"/></svg>
<span class="t" style="left:21.80px;top:131.74px;font-size:12px;color:#000;transform:scaleX(0.8407);">EURUSD</span>
<span class="t" style="left:180.80px;top:131.74px;font-size:12px;color:#f02020;transform:scaleX(0.8968);">1.07783</span>
<span class="t" style="left:256.00px;top:131.74px;font-size:12px;color:#f02020;transform:scaleX(0.8968);">1.07795</span>
<span class="t" style="left:21.80px;top:151.74px;font-size:12px;color:#000;transform:scaleX(0.8603);">GBPUSD</span>
<span class="t" style="left:180.80px;top:151.74px;font-size:12px;color:#1a1aff;transform:scaleX(0.8968);">1.25234</span>
<span class="t" style="left:256.00px;top:151.74px;font-size:12px;color:#1a1aff;transform:scaleX(0.8968);">1.25249</span>
<span class="t" style="left:21.80px;top:171.74px;font-size:12px;color:#000;transform:scaleX(0.8998);">GOLD</span>
<span class="t" style="left:180.80px;top:171.74px;font-size:12px;color:#f02020;transform:scaleX(0.8968);">2342.83</span>
<span class="t" style="left:256.00px;top:171.74px;font-size:12px;color:#f02020;transform:scaleX(0.8968);">2343.15</span>
<span class="t" style="left:21.80px;top:191.74px;font-size:12px;color:#000;transform:scaleX(0.8364);">USDJPY</span>
<span class="t" style="left:21.80px;top:211.74px;font-size:12px;color:#000;transform:scaleX(0.8406);">EURGBP</span>
<span class="t" style="left:21.80px;top:231.74px;font-size:12px;color:#000;transform:scaleX(0.8153);">EURJPY</span>
<span class="t" style="left:21.80px;top:251.74px;font-size:12px;color:#000;transform:scaleX(0.8363);">GBPJPY</span>
<span class="t" style="left:21.80px;top:271.74px;font-size:12px;color:#000;transform:scaleX(0.8801);">USDCAD</span>
<span class="t" style="left:21.80px;top:291.74px;font-size:12px;color:#000;transform:scaleX(0.8485);">CHFJPY</span>
<span class="t" style="left:21.80px;top:311.74px;font-size:12px;color:#000;transform:scaleX(0.8520);">EURCHF</span>
<span class="t" style="left:21.80px;top:331.74px;font-size:12px;color:#000;transform:scaleX(0.8719);">GBPCHF</span>
<span class="t" style="left:21.80px;top:351.74px;font-size:12px;color:#000;transform:scaleX(0.8575);">CADJPY</span>
<span class="t" style="left:21.80px;top:371.74px;font-size:12px;color:#000;transform:scaleX(0.8604);">EURCAD</span>
<span class="t" style="left:21.80px;top:391.74px;font-size:12px;color:#000;transform:scaleX(0.8800);">GBPCAD</span>
<span class="t" style="left:21.80px;top:411.74px;font-size:12px;color:#000;transform:scaleX(0.8999);">AUDUSD</span>
<span class="t" style="left:21.80px;top:431.74px;font-size:12px;color:#000;transform:scaleX(0.9120);">NZDUSD</span>
<span class="t" style="left:21.80px;top:451.74px;font-size:12px;color:#000;transform:scaleX(0.9120);">AUDCHF</span>
<span class="t" style="left:21.80px;top:471.74px;font-size:12px;color:#000;transform:scaleX(0.9082);">CHFPLN</span>
<span class="t" style="left:21.80px;top:491.74px;font-size:12px;color:#000;transform:scaleX(0.9245);">NZDCHF</span>
<span class="t" style="left:21.80px;top:511.74px;font-size:12px;color:#000;transform:scaleX(0.8605);">CHFSGD</span>
<span class="t" style="left:21.80px;top:531.74px;font-size:12px;color:#000;transform:scaleX(0.9196);">AUDCAD</span>
<span class="t" style="left:21.80px;top:551.74px;font-size:12px;color:#000;transform:scaleX(0.8786);">AUDJPY</span>
<div class="r" style="left:299px;top:104px;width:18px;height:469px;background:#f0f0f0;"></div>
<div class="r" style="left:300px;top:121px;width:16px;height:17px;background:#cdcdcd;"></div>
<svg class="r" style="left:303px;top:109px;" width="10" height="8" viewBox="0 0 10 8"><path d="M1.7 6.4L5 3l3.3 3.4" fill="none" stroke="#606060" stroke-width="2"/></svg>
<svg class="r" style="left:303px;top:561px;" width="10" height="8" viewBox="0 0 10 8"><path d="M1.7 1.6L5 5l3.3-3.4" fill="none" stroke="#606060" stroke-width="2"/></svg>
<div class="r" style="left:68px;top:573px;width:248px;height:1px;background:#000;"></div>
<div class="r" style="left:3px;top:573px;width:65px;height:20px;background:#fff;box-sizing:border-box;border:1px solid #000;border-top:none;"></div>
<span class="t" style="left:12.90px;top:576.64px;font-size:12px;color:#000;">Symbols</span>
<span class="t" style="left:77.90px;top:576.64px;font-size:12px;color:#6d6d6d;transform:scaleX(0.9814);">Details</span>
<div class="r" style="left:123px;top:577px;width:1px;height:15px;background:#6d6d6d;"></div>
<span class="t" style="left:133.20px;top:576.64px;font-size:12px;color:#6d6d6d;transform:scaleX(0.9765);">Trading</span>
<div class="r" style="left:183px;top:577px;width:1px;height:15px;background:#6d6d6d;"></div>
<span class="t" style="left:193.10px;top:576.64px;font-size:12px;color:#6d6d6d;transform:scaleX(0.9691);">Ticks</span>
<div class="r" style="left:317px;top:103px;width:1px;height:494px;background:#fff;"></div>
<div class="r" style="left:319px;top:87px;width:1px;height:512px;background:#f9f9f9;"></div>
<div class="r" style="left:320px;top:86px;width:1px;height:514px;background:#a0a0a0;"></div>
<div class="r" style="left:321px;top:87px;width:1px;height:513px;background:#696969;"></div>
<div class="r" style="left:0px;top:596px;width:318px;height:1px;background:#fff;"></div>
<div class="r" style="left:0px;top:599px;width:322px;height:1px;background:#a0a0a0;"></div>
<div class="r" style="left:0px;top:600px;width:1746px;height:1px;background:#fff;"></div>
<div class="r" style="left:0px;top:601px;width:1746px;height:3px;background:#f2f2f2;"></div>
<div class="r" style="left:0px;top:604px;width:12px;height:310px;background:#f0f0f0;"></div>
<div class="r" style="left:0px;top:618px;width:11px;height:296px;background:linear-gradient(180deg,#d5e2f0,#bdccdf);"></div>
<svg class="r" style="left:0px;top:606px;" width="8" height="8" viewBox="0 0 8 8"><path d="M1.3 1.5l5.2 4.2M6.5 1.5l-5.2 4.2" stroke="#000" stroke-width="1.9"/></svg>
<div class="r" style="left:12px;top:604px;width:1732px;height:286px;background:#fff;box-sizing:border-box;border-top:1px solid #a0a0a0;border-left:1px solid #a0a0a0;"></div>
<div class="r" style="left:1744px;top:604px;width:1px;height:308px;background:#e3e3e3;"></div>
<div class="r" style="left:1745px;top:600px;width:1px;height:314px;background:#fff;"></div>
<div class="r" style="left:12px;top:889px;width:1732px;height:23px;background:#f0f0f0;"></div>
<div class="r" style="left:12px;top:604px;width:1px;height:308px;background:#a0a0a0;"></div>
<div class="r" style="left:13px;top:889px;width:1731px;height:1px;background:#000;"></div>
<div class="r" style="left:15px;top:889px;width:70px;height:20px;background:#fff;box-sizing:border-box;border:1px solid #000;border-top:none;"></div>
<span class="t" style="left:25.70px;top:892.94px;font-size:12px;color:#000;transform:scaleX(0.9818);">Overview</span>
<span class="t" style="left:94.10px;top:892.94px;font-size:12px;color:#6d6d6d;transform:scaleX(1.0118);">Agents</span>
<div class="r" style="left:141px;top:893px;width:1px;height:15px;background:#6d6d6d;"></div>
<span class="t" style="left:150.80px;top:892.94px;font-size:12px;color:#6d6d6d;transform:scaleX(0.9858);">Journal</span>
<div class="r" style="left:0px;top:912px;width:1746px;height:2px;background:#fafafa;"></div>
<div class="r" style="left:0;top:618px;width:11px;height:296px;"><span class="t" style="left:0.1px;top:292.2px;font-size:11px;transform-origin:0 0;transform:rotate(-90deg) scaleX(1.0233);">Strategy Tester</span></div>
<svg class="r" style="left:1485px;top:894px;" width="13" height="15" viewBox="0 0 13 15"><path d="M2.3 4.5h8.6l.9 9h-10.4z" fill="#fbd000" stroke="#d39c10" stroke-width="1.1" stroke-linejoin="round"/><path d="M4.5 6.8V3.2a2.1 2.1 0 0 1 4.2 0V6.8" fill="none" stroke="#d39c10" stroke-width="1.1"/></svg>
<span class="t" style="left:1503.50px;top:895.84px;font-size:12px;color:#000;transform:scaleX(1.0089);">Market</span>
<svg class="r" style="left:1552px;top:895px;" width="16" height="14" viewBox="0 0 16 14"><circle cx="8" cy="7" r="1.4" fill="#c4c4c4"/><path d="M5.2 4.2a4 4 0 0 0 0 5.6M10.8 4.2a4 4 0 0 1 0 5.6M3 2.2a7 7 0 0 0 0 9.6M13 2.2a7 7 0 0 1 0 9.6" fill="none" stroke="#c4c4c4" stroke-width="1"/></svg>
<span class="t" style="left:1572.20px;top:895.84px;font-size:12px;color:#b0b0b0;transform:scaleX(0.9502);">Signals</span>
<svg class="r" style="left:1621px;top:894px;" width="16" height="14" viewBox="0 0 16 14"><path d="M4 8.5a3 3 0 0 1 .3-6 4.2 4.2 0 0 1 8 .9 2.6 2.6 0 0 1-.3 5.1z" fill="#e6e6e6" stroke="#c0c0c0" stroke-width="1"/><path d="M8 8.5v3M1 12h14" stroke="#c0c0c0" stroke-width="1"/><circle cx="8" cy="12" r="1.3" fill="#e6e6e6" stroke="#c0c0c0" stroke-width=".8"/></svg>
<span class="t" style="left:1640.90px;top:895.84px;font-size:12px;color:#b0b0b0;transform:scaleX(0.8662);">VPS</span>
<svg class="r" style="left:1674px;top:894px;" width="15" height="15" viewBox="0 0 15 15"><rect x=".8" y=".8" width="13.4" height="13.4" rx="1.6" fill="#dcedfc" stroke="#1a6bb0" stroke-width="1.4"/><path d="M1 4.6h13M1 8.6h13" stroke="#1a6bb0" stroke-width="1.1"/><path d="M3.5 11.5h3M8.5 11.5h3" stroke="#1a6bb0" stroke-width="1.1"/></svg>
<span class="t" style="left:1693.30px;top:895.84px;font-size:12px;color:#000;transform:scaleX(1.0057);">Toolbox</span>
<div class="r" style="left:29px;top:622px;width:100px;height:100px;background:#fff;box-sizing:border-box;border:1px solid #e6e6e6;"></div>
<svg class="r" style="left:29px;top:622px;" width="100" height="100" viewBox="0 0 100 100"><rect x="14.5" y="14.5" width="40" height="36" fill="#fff" stroke="#bcc0c6" stroke-width="1"/><path d="M15 16.5h39" stroke="#e3e5e8" stroke-width="1"/><rect x="18" y="39" width="1" height="7" fill="#0a50e0"/><rect x="20" y="37" width="1" height="9" fill="#f85a48"/><rect x="24" y="31" width="1" height="15" fill="#0a50e0"/><rect x="26" y="27" width="1" height="19" fill="#f85a48"/><rect x="30" y="22" width="1" height="24" fill="#0a50e0"/><rect x="32" y="20" width="1" height="26" fill="#f85a48"/><rect x="36" y="25" width="1" height="21" fill="#0a50e0"/><rect x="38" y="23" width="1" height="23" fill="#f85a48"/><rect x="42" y="36" width="1" height="10" fill="#0a50e0"/><rect x="44" y="32" width="1" height="14" fill="#f85a48"/><rect x="48" y="40" width="1" height="6" fill="#0a50e0"/><rect x="50" y="38" width="1" height="8" fill="#f85a48"/><path d="M13.8 73.6C16.9 74.7 17.3 78.2 23.0 77.0C28.7 75.8 26.0 72.7 31.0 70.0C36.0 67.3 34.0 70.8 38.0 69.0C42.0 67.2 41.0 67.8 43.0 64.5C45.0 61.2 41.7 61.8 44.0 59.0C46.3 56.2 46.7 58.7 50.0 56.0C53.3 53.3 52.7 55.0 54.0 51.0C55.3 47.0 52.7 47.7 54.0 44.0C55.3 40.3 54.7 41.8 58.0 40.0C61.3 38.2 61.0 41.2 64.0 38.5C67.0 35.8 65.3 35.7 67.0 32.0C68.7 28.3 66.0 29.5 69.0 27.5C72.0 25.5 72.0 27.8 76.0 26.0C80.0 24.2 77.8 24.0 81.0 22.0C84.2 20.0 84.0 20.7 85.5 20.0" fill="none" stroke="#0a50e0" stroke-width="2.2" stroke-linecap="butt"/><path d="M13.8 67.5C16.5 68.7 16.9 72.0 22.0 71.0C27.1 70.0 24.0 66.3 29.0 64.5C34.0 62.7 33.0 67.7 37.0 65.5C41.0 63.3 37.3 61.5 41.0 58.0C44.7 54.5 45.0 59.0 48.0 55.0C51.0 51.0 47.3 50.3 50.0 46.0C52.7 41.7 53.0 46.3 56.0 42.0C59.0 37.7 56.0 36.3 59.0 33.0C62.0 29.7 61.3 33.0 65.0 32.0C68.7 31.0 67.3 33.3 70.0 30.0C72.7 26.7 70.0 25.3 73.0 22.0C76.0 18.7 74.8 22.2 79.0 20.0C83.2 17.8 83.3 17.0 85.5 15.5" fill="none" stroke="#10a828" stroke-width="2.2" stroke-linecap="butt"/><rect x="39.5" y="65.5" width="46" height="20" fill="#fff" stroke="#bcc0c6" stroke-width="1"/><path d="M40 68.5h45" stroke="#e3e5e8" stroke-width="1"/><rect x="43" y="75" width="1" height="6" fill="#10a828"/><rect x="45" y="73" width="1" height="8" fill="#10a828"/><rect x="49" y="75" width="1" height="6" fill="#10a828"/><rect x="51" y="73" width="1" height="8" fill="#10a828"/><rect x="55" y="75" width="1" height="6" fill="#10a828"/><rect x="57" y="73" width="1" height="8" fill="#10a828"/><rect x="61" y="75" width="1" height="6" fill="#10a828"/><rect x="63" y="73" width="1" height="8" fill="#10a828"/><rect x="67" y="75" width="1" height="6" fill="#10a828"/><rect x="69" y="73" width="1" height="8" fill="#10a828"/><rect x="73" y="75" width="1" height="6" fill="#10a828"/><rect x="75" y="73" width="1" height="8" fill="#10a828"/><rect x="79" y="75" width="1" height="6" fill="#10a828"/><rect x="81" y="73" width="1" height="8" fill="#10a828"/></svg>
<span class="t" style="left:60.47px;top:734.09px;font-size:13.33px;color:#000;">Single</span>
<div class="r" style="left:145px;top:622px;width:100px;height:100px;background:#fff;box-sizing:border-box;border:1px solid #e6e6e6;"></div>
<svg class="r" style="left:145px;top:622px;" width="100" height="100" viewBox="0 0 100 100"><path d="M18.5 40V47.5M18.5 57.5V58" stroke="#3a3f4a" stroke-width="1"/><rect x="16.5" y="47.5" width="4" height="10.0" fill="#fff" stroke="#3a3f4a" stroke-width="1"/><path d="M27.5 48V54.5M27.5 54.5V68" stroke="#3a3f4a" stroke-width="1"/><rect x="25.5" y="54.5" width="4" height="0.0" fill="#fff" stroke="#3a3f4a" stroke-width="1"/><path d="M36.5 47V62.5M36.5 65.5V72" stroke="#3a3f4a" stroke-width="1"/><rect x="34.5" y="62.5" width="4" height="3.0" fill="#3a3f4a" stroke="#3a3f4a" stroke-width="1"/><path d="M45.5 44V48.5M45.5 59.5V69" stroke="#3a3f4a" stroke-width="1"/><rect x="43.5" y="48.5" width="4" height="11.0" fill="#fff" stroke="#3a3f4a" stroke-width="1"/><path d="M54.5 30V34.5M54.5 48.5V54" stroke="#3a3f4a" stroke-width="1"/><rect x="52.5" y="34.5" width="4" height="14.0" fill="#fff" stroke="#3a3f4a" stroke-width="1"/><path d="M63.5 31V38.5M63.5 44.5V51" stroke="#3a3f4a" stroke-width="1"/><rect x="61.5" y="38.5" width="4" height="6.0" fill="#3a3f4a" stroke="#3a3f4a" stroke-width="1"/><path d="M72.5 20V23.5M72.5 40.5V45" stroke="#3a3f4a" stroke-width="1"/><rect x="70.5" y="23.5" width="4" height="17.0" fill="#fff" stroke="#3a3f4a" stroke-width="1"/><path d="M81.5 16V20.5M81.5 37.5V44" stroke="#3a3f4a" stroke-width="1"/><rect x="79.5" y="20.5" width="4" height="17.0" fill="#fff" stroke="#3a3f4a" stroke-width="1"/><path d="M14.1 59.3C16.3 60.4 16.3 63.2 20.7 62.6C25.1 62.0 22.9 58.5 27.3 57.6C31.7 56.7 29.7 61.5 33.9 60.0C38.1 58.5 35.6 55.5 39.8 53.0C44.0 50.5 42.7 55.3 46.4 52.6C50.1 49.9 47.5 48.0 51.0 45.0C54.5 42.0 53.7 47.0 57.0 43.7C60.3 40.4 57.9 38.4 60.9 35.2C63.9 32.0 62.8 36.8 66.1 34.1C69.4 31.4 66.6 29.1 70.8 27.0C75.0 24.9 73.9 29.0 78.7 27.9C83.5 26.8 83.0 25.0 85.2 23.6" fill="none" stroke="#fff" stroke-width="4.2" stroke-linecap="butt"/><path d="M14.1 59.3C16.3 60.4 16.3 63.2 20.7 62.6C25.1 62.0 22.9 58.5 27.3 57.6C31.7 56.7 29.7 61.5 33.9 60.0C38.1 58.5 35.6 55.5 39.8 53.0C44.0 50.5 42.7 55.3 46.4 52.6C50.1 49.9 47.5 48.0 51.0 45.0C54.5 42.0 53.7 47.0 57.0 43.7C60.3 40.4 57.9 38.4 60.9 35.2C63.9 32.0 62.8 36.8 66.1 34.1C69.4 31.4 66.6 29.1 70.8 27.0C75.0 24.9 73.9 29.0 78.7 27.9C83.5 26.8 83.0 25.0 85.2 23.6" fill="none" stroke="#10a828" stroke-width="2.3" stroke-linecap="butt"/><rect x="15" y="76.7" width="1.15" height="8.8" fill="#000"/><rect x="18" y="78.0" width="1.15" height="7.5" fill="#000"/><rect x="21" y="79.0" width="1.15" height="6.5" fill="#000"/><rect x="24" y="81.3" width="1.15" height="4.2" fill="#000"/><rect x="27" y="83.7" width="1.15" height="1.8" fill="#000"/><rect x="30" y="81.3" width="1.15" height="4.2" fill="#000"/><rect x="33" y="79.0" width="1.15" height="6.5" fill="#000"/><rect x="36" y="77.4" width="1.15" height="8.1" fill="#000"/><rect x="39" y="76.7" width="1.15" height="8.8" fill="#000"/><rect x="42" y="76.7" width="1.15" height="8.8" fill="#000"/><rect x="45" y="78.4" width="1.15" height="7.1" fill="#000"/><rect x="48" y="80.6" width="1.15" height="4.9" fill="#000"/><rect x="51" y="77.0" width="1.15" height="8.5" fill="#000"/><rect x="54" y="74.7" width="1.15" height="10.8" fill="#000"/><rect x="57" y="70.8" width="1.15" height="14.7" fill="#000"/><rect x="60" y="68.1" width="1.15" height="17.4" fill="#000"/><rect x="63" y="67.9" width="1.15" height="17.6" fill="#000"/><rect x="66" y="70.1" width="1.15" height="15.4" fill="#000"/><rect x="69" y="71.8" width="1.15" height="13.7" fill="#000"/><rect x="72" y="73.4" width="1.15" height="12.1" fill="#000"/><rect x="75" y="71.8" width="1.15" height="13.7" fill="#000"/><rect x="78" y="67.5" width="1.15" height="18.0" fill="#000"/><rect x="81" y="65.5" width="1.15" height="20.0" fill="#000"/><rect x="84" y="63.9" width="1.15" height="21.6" fill="#000"/><path d="M14.5 79.0C16.3 79.5 15.8 79.0 20.0 80.5C24.2 82.0 22.7 83.7 27.0 83.5C31.3 83.3 29.0 82.2 33.0 80.0C37.0 77.8 34.7 77.8 39.0 77.0C43.3 76.2 41.7 77.2 46.0 77.5C50.3 77.8 48.0 79.5 52.0 78.0C56.0 76.5 54.7 75.8 58.0 73.0C61.3 70.2 59.0 71.0 62.0 69.5C65.0 68.0 63.7 68.3 67.0 68.5C70.3 68.7 68.7 70.0 72.0 70.0C75.3 70.0 72.8 70.3 77.0 68.5C81.2 66.7 82.0 65.8 84.5 64.5" fill="none" stroke="#10a828" stroke-width="0.9" stroke-dasharray="3 2.2"/></svg>
<span class="t" style="left:169.44px;top:734.09px;font-size:13.33px;color:#000;">Indicator</span>
<div class="r" style="left:261px;top:622px;width:100px;height:100px;background:#fff;box-sizing:border-box;border:1px solid #e6e6e6;"></div>
<svg class="r" style="left:261px;top:622px;" width="100" height="100" viewBox="0 0 100 100"><path d="M18.5 41V48.5M18.5 58.5V67" stroke="#3a3f4a" stroke-width="1"/><rect x="16.5" y="48.5" width="4" height="10.0" fill="#fff" stroke="#3a3f4a" stroke-width="1"/><path d="M27.5 49V55.5M27.5 62.5V68" stroke="#3a3f4a" stroke-width="1"/><rect x="25.5" y="55.5" width="4" height="7.0" fill="#3a3f4a" stroke="#3a3f4a" stroke-width="1"/><path d="M36.5 48V53.5M36.5 67.5V73" stroke="#3a3f4a" stroke-width="1"/><rect x="34.5" y="53.5" width="4" height="14.0" fill="#3a3f4a" stroke="#3a3f4a" stroke-width="1"/><path d="M45.5 45V49.5M45.5 60.5V70" stroke="#3a3f4a" stroke-width="1"/><rect x="43.5" y="49.5" width="4" height="11.0" fill="#fff" stroke="#3a3f4a" stroke-width="1"/><path d="M54.5 31V36.5M54.5 49.5V56" stroke="#3a3f4a" stroke-width="1"/><rect x="52.5" y="36.5" width="4" height="13.0" fill="#fff" stroke="#3a3f4a" stroke-width="1"/><path d="M63.5 32V38.5M63.5 45.5V53" stroke="#3a3f4a" stroke-width="1"/><rect x="61.5" y="38.5" width="4" height="7.0" fill="#3a3f4a" stroke="#3a3f4a" stroke-width="1"/><path d="M72.5 21V24.5M72.5 41.5V46" stroke="#3a3f4a" stroke-width="1"/><rect x="70.5" y="24.5" width="4" height="17.0" fill="#fff" stroke="#3a3f4a" stroke-width="1"/><path d="M81.5 16V21.5M81.5 38.5V46" stroke="#3a3f4a" stroke-width="1"/><rect x="79.5" y="21.5" width="4" height="17.0" fill="#fff" stroke="#3a3f4a" stroke-width="1"/><path d="M41.8 21.7h7v6.9h3l-6.6 7-6.5-7h3.1z" fill="#f85a48"/><path d="M27.2 71.7l6.5 6.8h-3v7h-7v-7h-3z" fill="#0a50e0"/><path d="M72.2 49.7l6.5 6.8h-3v7h-7v-7h-3z" fill="#0a50e0"/></svg>
<span class="t" style="left:284.45px;top:734.09px;font-size:13.33px;color:#000;">Visualize</span>
<div class="r" style="left:377px;top:622px;width:100px;height:100px;background:#fff;box-sizing:border-box;border:1px solid #e6e6e6;"></div>
<svg class="r" style="left:377px;top:622px;" width="100" height="100" viewBox="0 0 100 100"><path d="M13.8 76.9C16.8 77.9 16.9 81.2 22.7 80.0C28.5 78.8 25.1 76.3 31.2 73.4C37.3 70.5 36.7 74.9 41.1 71.4C45.5 67.9 40.7 67.1 44.4 62.8C48.1 58.5 49.1 63.6 52.3 58.6C55.5 53.6 52.6 53.1 54.0 47.7C55.4 42.3 53.3 44.8 56.6 42.4C59.9 40.0 60.4 43.9 63.9 40.4C67.4 36.9 63.2 35.6 67.2 31.9C71.2 28.2 69.7 32.1 75.8 29.2C81.9 26.3 82.3 25.3 85.5 23.3" fill="none" stroke="#0a50e0" stroke-width="2.0" stroke-linecap="butt"/><path d="M13.8 71.1C16.3 72.2 16.4 75.2 21.3 74.4C26.2 73.6 23.5 70.9 28.6 68.8C33.7 66.7 32.8 70.7 36.5 68.1C40.2 65.5 36.1 64.6 39.8 61.1C43.5 57.6 44.2 61.6 47.7 57.6C51.2 53.6 47.2 53.2 50.3 49.0C53.4 44.8 54.0 49.4 56.9 45.0C59.8 40.6 55.6 39.3 58.9 35.8C62.2 32.3 62.4 38.0 66.8 34.5C71.2 31.0 68.0 29.2 72.0 25.3C76.0 21.4 74.2 25.0 78.7 22.7C83.2 20.4 83.2 19.8 85.5 18.3" fill="none" stroke="#10a828" stroke-width="2.0" stroke-linecap="butt"/><circle cx="23.9" cy="42.4" r="7.9" fill="none" stroke="#6f7378" stroke-width="1.9"/><path d="M23.9 34.4v-3" stroke="#6f7378" stroke-width="1.6"/><path d="M20.7 31.0h6.4" stroke="#6f7378" stroke-width="2"/><path d="M30.099999999999998 36.199999999999996l2.6-2.6" stroke="#6f7378" stroke-width="1.8"/><path d="M30.5 32.0l4.4 3.6-2 1.6z" fill="#6f7378"/><path d="M18.5 42.0a5.6 5.6 0 0 1 7.8-4" fill="none" stroke="#f85a48" stroke-width="1"/><path d="M22.299999999999997 43.8l4.4-4.2" stroke="#f85a48" stroke-width="1.6"/><path d="M21.4 54.7v8M27.4 54.7v8" stroke="#0a50e0" stroke-width="1" stroke-dasharray="1.2 1.2"/><path d="M21.4 62.4h-3.4l6.4 5.9 6.4-5.9h-3.4" fill="none" stroke="#0a50e0" stroke-width="1.1" stroke-linejoin="round"/><path d="M63.1 57.6v-7.8M69.1 57.6v-7.8" stroke="#f85a48" stroke-width="1" stroke-dasharray="1.2 1.2"/><path d="M63.1 50h-3.3l6.3-5.9 6.5 5.9h-3.5" fill="none" stroke="#f85a48" stroke-width="1.2" stroke-linejoin="round"/><defs><linearGradient id="swg" gradientUnits="userSpaceOnUse" x1="58" y1="82" x2="79" y2="61"><stop offset=".12" stop-color="#f85a48" stop-opacity="0"/><stop offset=".3" stop-color="#f85a48"/><stop offset=".46" stop-color="#8a7472"/><stop offset=".56" stop-color="#6f7378"/></linearGradient></defs><circle cx="68" cy="73" r="7.9" fill="none" stroke="url(#swg)" stroke-width="1.9"/><path d="M68 65v-3" stroke="url(#swg)" stroke-width="1.6"/><path d="M64.8 61.6h6.4" stroke="url(#swg)" stroke-width="2"/><path d="M74.2 66.8l2.6-2.6" stroke="url(#swg)" stroke-width="1.8"/><path d="M74.6 62.6l4.4 3.6-2 1.6z" fill="url(#swg)"/><path d="M62.6 72.6a5.6 5.6 0 0 1 7.8-4" fill="none" stroke="#f85a48" stroke-width="1"/><path d="M66.4 74.4l4.4-4.2" stroke="#f85a48" stroke-width="1.6"/><path d="M52.4 69.8h7.6l-.9 2.3h-4.2zM56 75.4h5l-.6 2.2h-2.6z" fill="#f85a48"/></svg>
<span class="t" style="left:379.59px;top:734.09px;font-size:13.33px;color:#000;">Stress &amp; Delays</span>
<div class="r" style="left:509px;top:622px;width:100px;height:100px;background:#fff;box-sizing:border-box;border:1px solid #e6e6e6;"></div>
<svg class="r" style="left:509px;top:622px;" width="100" height="100" viewBox="0 0 100 100"><circle cx="36.1" cy="20.0" r="1.45" fill="#0a50e0"/><circle cx="81.0" cy="21.1" r="1.45" fill="#0a50e0"/><circle cx="19.0" cy="26.1" r="1.45" fill="#0a50e0"/><circle cx="61.9" cy="23.1" r="1.45" fill="#0a50e0"/><circle cx="27.9" cy="30.2" r="1.45" fill="#0a50e0"/><circle cx="37.9" cy="29.1" r="1.45" fill="#0a50e0"/><circle cx="47.0" cy="28.1" r="1.45" fill="#0a50e0"/><circle cx="69.0" cy="29.1" r="1.45" fill="#0a50e0"/><circle cx="59.0" cy="33.1" r="1.45" fill="#0a50e0"/><circle cx="20.0" cy="36.1" r="1.45" fill="#0a50e0"/><circle cx="33.1" cy="38.1" r="1.45" fill="#0a50e0"/><circle cx="27.0" cy="40.1" r="1.45" fill="#0a50e0"/><circle cx="41.1" cy="39.0" r="1.45" fill="#0a50e0"/><circle cx="46.1" cy="39.0" r="1.45" fill="#0a50e0"/><circle cx="55.1" cy="38.1" r="1.45" fill="#0a50e0"/><circle cx="52.0" cy="41.1" r="1.45" fill="#0a50e0"/><circle cx="61.0" cy="39.0" r="1.45" fill="#0a50e0"/><circle cx="70.1" cy="38.1" r="1.45" fill="#0a50e0"/><circle cx="66.0" cy="42.0" r="1.45" fill="#0a50e0"/><circle cx="75.0" cy="41.1" r="1.45" fill="#0a50e0"/><circle cx="19.0" cy="45.1" r="1.45" fill="#0a50e0"/><circle cx="27.9" cy="45.1" r="1.45" fill="#0a50e0"/><circle cx="32.0" cy="46.0" r="1.45" fill="#0a50e0"/><circle cx="37.0" cy="44.1" r="1.45" fill="#0a50e0"/><circle cx="42.0" cy="46.0" r="1.45" fill="#0a50e0"/><circle cx="48.1" cy="44.1" r="1.45" fill="#0a50e0"/><circle cx="53.1" cy="46.0" r="1.45" fill="#0a50e0"/><circle cx="57.0" cy="43.1" r="1.45" fill="#0a50e0"/><circle cx="62.1" cy="45.1" r="1.45" fill="#0a50e0"/><circle cx="69.0" cy="45.1" r="1.45" fill="#0a50e0"/><circle cx="81.0" cy="44.1" r="1.45" fill="#0a50e0"/><circle cx="19.0" cy="53.1" r="1.45" fill="#0a50e0"/><circle cx="24.0" cy="53.1" r="1.45" fill="#0a50e0"/><circle cx="32.0" cy="52.2" r="1.45" fill="#0a50e0"/><circle cx="36.1" cy="52.2" r="1.45" fill="#0a50e0"/><circle cx="48.1" cy="53.1" r="1.45" fill="#0a50e0"/><circle cx="56.1" cy="52.2" r="1.45" fill="#0a50e0"/><circle cx="60.1" cy="54.2" r="1.45" fill="#0a50e0"/><circle cx="65.1" cy="52.2" r="1.45" fill="#0a50e0"/><circle cx="72.1" cy="52.2" r="1.45" fill="#0a50e0"/><circle cx="27.0" cy="56.1" r="1.45" fill="#0a50e0"/><circle cx="34.0" cy="57.0" r="1.45" fill="#0a50e0"/><circle cx="41.1" cy="55.1" r="1.45" fill="#0a50e0"/><circle cx="55.1" cy="58.1" r="1.45" fill="#0a50e0"/><circle cx="67.1" cy="56.1" r="1.45" fill="#0a50e0"/><circle cx="71.0" cy="58.1" r="1.45" fill="#0a50e0"/><circle cx="83.1" cy="56.1" r="1.45" fill="#0a50e0"/><circle cx="17.0" cy="60.1" r="1.45" fill="#0a50e0"/><circle cx="27.0" cy="61.1" r="1.45" fill="#0a50e0"/><circle cx="37.9" cy="60.1" r="1.45" fill="#0a50e0"/><circle cx="44.0" cy="61.1" r="1.45" fill="#0a50e0"/><circle cx="62.1" cy="59.2" r="1.45" fill="#0a50e0"/><circle cx="77.1" cy="61.1" r="1.45" fill="#0a50e0"/><circle cx="51.0" cy="65.1" r="1.45" fill="#0a50e0"/><circle cx="68.1" cy="64.0" r="1.45" fill="#0a50e0"/><circle cx="22.9" cy="68.1" r="1.45" fill="#0a50e0"/><circle cx="35.0" cy="67.1" r="1.45" fill="#0a50e0"/><circle cx="65.1" cy="69.0" r="1.45" fill="#0a50e0"/><circle cx="75.0" cy="68.1" r="1.45" fill="#0a50e0"/><circle cx="46.0" cy="73.1" r="1.45" fill="#0a50e0"/><circle cx="70.1" cy="79.1" r="1.45" fill="#0a50e0"/><rect x="14" y="49" width="72" height="1" fill="#3a3f4a"/></svg>
<span class="t" style="left:530.47px;top:734.09px;font-size:13.33px;color:#000;">Complete</span>
<span class="t" style="left:523.43px;top:750.09px;font-size:13.33px;color:#000;">optimization</span>
<div class="r" style="left:625px;top:622px;width:100px;height:100px;background:#fff;box-sizing:border-box;border:1px solid #e6e6e6;"></div>
<svg class="r" style="left:625px;top:622px;" width="100" height="100" viewBox="0 0 100 100"><defs><pattern id="chk" width="8" height="8" patternUnits="userSpaceOnUse"><rect width="8" height="8" fill="#f1f1f1"/><rect width="4" height="4" fill="#e0e0e0"/><rect x="4" y="4" width="4" height="4" fill="#e0e0e0"/></pattern><linearGradient id="gg" x1="0" x2="1" y1="0" y2="0" gradientUnits="userSpaceOnUse" gradientTransform="translate(13.8 0) scale(72 1)"><stop offset="0" stop-color="#22c434"/><stop offset="1" stop-color="#039a1e"/></linearGradient></defs><rect x="13.8" y="13.8" width="72" height="72" fill="url(#chk)"/><path d="M21.8 17.8h4v4h-4zM37.8 17.8h4v4h-4zM49.8 17.8h8v4h-8zM61.8 17.8h4v4h-4zM73.8 17.8h8v4h-8zM33.8 21.8h4v4h-4zM61.8 21.8h4v4h-4zM17.8 25.8h4v4h-4zM45.8 25.8h4v4h-4zM77.8 25.8h4v4h-4zM29.8 29.8h8v4h-8zM49.8 29.8h4v4h-4zM61.8 29.8h8v4h-8zM73.8 29.8h8v4h-8zM13.8 33.8h4v4h-4zM77.8 33.8h4v4h-4zM69.8 37.8h4v4h-4zM17.8 41.8h4v4h-4zM25.8 41.8h4v4h-4zM33.8 41.8h8v4h-8zM45.8 41.8h12v4h-12zM65.8 41.8h4v4h-4zM77.8 41.8h8v4h-8zM69.8 45.8h4v4h-4zM57.8 49.8h4v4h-4zM21.8 53.8h4v4h-4zM29.8 53.8h8v4h-8zM45.8 53.8h8v4h-8zM61.8 53.8h4v4h-4zM73.8 53.8h4v4h-4zM69.8 57.8h8v4h-8zM17.8 61.8h4v4h-4zM37.8 61.8h8v4h-8zM53.8 61.8h8v4h-8zM77.8 61.8h4v4h-4zM57.8 65.8h4v4h-4zM69.8 65.8h4v4h-4zM21.8 69.8h8v4h-8zM33.8 69.8h8v4h-8zM49.8 69.8h4v4h-4zM65.8 69.8h12v4h-12zM17.8 77.8h4v4h-4zM25.8 77.8h8v4h-8zM45.8 77.8h12v4h-12zM65.8 77.8h16v4h-16z" fill="url(#gg)"/></svg>
<span class="t" style="left:652.03px;top:734.09px;font-size:13.33px;color:#000;">Genetic</span>
<span class="t" style="left:639.43px;top:750.09px;font-size:13.33px;color:#000;">optimization</span>
<div class="r" style="left:741px;top:622px;width:100px;height:100px;background:#fff;box-sizing:border-box;border:1px solid #e6e6e6;"></div>
<svg class="r" style="left:741px;top:622px;" width="100" height="100" viewBox="0 0 100 100"><rect x="20.3" y="21.2" width="13" height="13" fill="#fff" stroke="#bcc0c6" stroke-width="0.9"/><rect x="65.3" y="21.2" width="13" height="13" fill="#fff" stroke="#bcc0c6" stroke-width="0.9"/><path d="M22.5 25.3l5.5 4.8 9.7-9.3" fill="none" stroke="#10a828" stroke-width="2"/><path d="M63.1 25.3l5.5 4.8 9.6-9.3M73.4 28.7l2.1 1.4 9.6-9.3" fill="none" stroke="#10a828" stroke-width="2"/><clipPath id="fwc"><rect x="13" y="20.8" width="73" height="70"/></clipPath><path d="M13.7 79.6C16.9 80.6 17.5 83.8 23.2 82.6C28.9 81.4 25.1 78.7 30.8 75.9C36.5 73.1 36.1 77.7 40.4 74.1C44.7 70.5 39.7 69.8 43.8 65.2C47.9 60.6 49.3 65.8 52.8 60.3C56.3 54.8 52.8 53.7 54.2 48.7C55.6 43.7 54.9 46.5 56.9 45.2C58.9 43.9 59.2 45.0 60.3 44.9" fill="none" stroke="#0a50e0" stroke-width="2.0" stroke-linecap="butt"/><path d="M13.7 74.1C16.4 75.0 16.9 77.8 21.9 76.8C26.9 75.8 23.7 72.9 28.7 71.1C33.7 69.3 33.1 74.0 37.0 71.3C40.9 68.6 36.5 66.8 40.4 63.1C44.3 59.4 45.5 64.2 48.7 60.3C51.9 56.4 47.3 55.7 50.0 51.4C52.7 47.1 53.8 51.6 56.9 47.3C60.0 43.0 57.8 41.6 59.2 38.4C60.6 35.2 60.5 37.9 61.2 37.7" fill="none" stroke="#10a828" stroke-width="2.0" stroke-linecap="butt"/><path d="M61.7 62.7C62.6 62.1 62.7 64.5 64.5 61.0C66.3 57.5 63.1 56.0 67.2 52.1C71.3 48.2 70.7 52.1 76.8 49.3C82.9 46.5 82.6 45.5 85.5 43.6" fill="none" stroke="#0a50e0" stroke-width="2.0" stroke-linecap="butt"/><path d="M61.7 55.7C64.0 55.5 65.2 58.1 68.6 55.1C72.0 52.1 68.8 50.1 72.0 46.6C75.2 43.1 73.7 47.0 78.2 44.5C82.7 42.0 83.1 40.8 85.5 39.0" fill="none" stroke="#10a828" stroke-width="2.0" stroke-linecap="butt"/><rect x="61" y="14" width="1" height="72" fill="#2a2f3a"/></svg>
<span class="t" style="left:766.56px;top:734.09px;font-size:13.33px;color:#000;">Forward</span>
<span class="t" style="left:755.43px;top:750.09px;font-size:13.33px;color:#000;">optimization</span>
<div class="r" style="left:873px;top:622px;width:100px;height:100px;background:#fff;box-sizing:border-box;border:1px solid #e6e6e6;"></div>
<svg class="r" style="left:873px;top:622px;" width="100" height="100" viewBox="0 0 100 100"><rect x="14.4" y="14.4" width="71" height="71" fill="#fff" stroke="#b4b8be" stroke-width="1"/><path d="M14.4 18.4h71" stroke="#b4b8be" stroke-width="0.8"/><path d="M17.7 40.5h64M17.7 63.5h64" stroke="#a9adb3" stroke-width="0.7"/><path d="M26.9 26l4.9 5.8h-9.8zM26.9 48l4.9 5.8h-9.8z" fill="#10a828"/><path d="M26.9 77.6l4.9-5.8h-9.8z" fill="#f85a48"/></svg>
<span class="t" style="left:877.07px;top:734.09px;font-size:13.33px;color:#000;">Market scanner</span>
<span class="t" style="left:915.76px;top:642.16px;font-size:18.5px;color:#0a50e0;-webkit-text-stroke:0.25px #0a50e0;">$</span>
<span class="t" style="left:938.16px;top:642.16px;font-size:18.5px;color:#0a50e0;-webkit-text-stroke:0.25px #0a50e0;">€</span>
<span class="t" style="left:915.76px;top:664.06px;font-size:18.5px;color:#f85a48;-webkit-text-stroke:0.25px #f85a48;">£</span>
<span class="t" style="left:938.16px;top:664.06px;font-size:18.5px;color:#0a50e0;-webkit-text-stroke:0.25px #0a50e0;">¥</span>
<span class="t" style="left:915.76px;top:686.86px;font-size:18.5px;color:#f85a48;-webkit-text-stroke:0.25px #f85a48;">€</span>
<span class="t" style="left:938.16px;top:686.86px;font-size:18.5px;color:#f85a48;-webkit-text-stroke:0.25px #f85a48;">£</span>
<div class="r" style="left:989px;top:622px;width:100px;height:100px;background:#fff;box-sizing:border-box;border:1px solid #e6e6e6;"></div>
<svg class="r" style="left:989px;top:622px;" width="100" height="100" viewBox="0 0 100 100"><path d="M28.2 24v31" stroke="#c4c7cb" stroke-width="0.9"/><path d="M28.2 17.5l2.5 6.8h-5z" fill="#c4c7cb"/><path d="M14.7 67.1L15.7 66.9L16.7 66.6L17.6 66.2L18.6 65.7L19.6 65.1L20.6 64.3L21.5 63.3L22.5 62.1L23.5 60.6L24.5 58.9L25.5 56.9L26.4 54.6L27.4 52.1L28.4 49.3L29.4 46.3L30.3 43.2L31.3 40.1L32.3 36.9L33.3 33.9L34.3 31.1L35.2 28.6L36.2 26.5L37.2 24.9L38.2 23.8L39.1 23.3L40.1 23.3L41.1 23.9L42.1 24.9L43.1 26.3L44.0 28.0L45.0 29.9L46.0 31.9L47.0 33.8L47.9 35.6L48.9 37.1L49.9 38.3L50.9 39.2L51.9 39.7L52.8 39.8L53.8 39.5L54.8 38.9L55.8 38.2L56.7 37.2L57.7 36.2L58.7 35.3L59.7 34.5L60.7 33.9L61.6 33.6L62.6 33.7L63.6 34.1L64.6 34.8L65.5 36.0L66.5 37.4L67.5 39.2L68.5 41.2L69.5 43.4L70.4 45.7L71.4 48.0L72.4 50.3L73.4 52.5L74.3 54.6L75.3 56.6L76.3 58.4L77.3 60.0L78.3 61.4L79.2 62.6L80.2 63.7L81.2 64.5L82.2 65.2L83.1 65.8L84.1 66.2L85.1 66.6" fill="none" stroke="rgb(48,100,230)" stroke-width="0.75"/><path d="M14.7 67.1L15.7 66.9L16.7 66.6L17.6 66.3L18.6 65.8L19.6 65.2L20.6 64.5L21.5 63.6L22.5 62.4L23.5 61.1L24.5 59.5L25.5 57.6L26.4 55.5L27.4 53.2L28.4 50.7L29.4 47.9L30.3 45.1L31.3 42.2L32.3 39.3L33.3 36.5L34.3 34.0L35.2 31.7L36.2 29.7L37.2 28.2L38.2 27.2L39.1 26.6L40.1 26.6L41.1 27.1L42.1 28.0L43.1 29.2L44.0 30.7L45.0 32.4L46.0 34.2L47.0 35.9L47.9 37.5L48.9 38.9L49.9 40.0L50.9 40.8L51.9 41.3L52.8 41.4L53.8 41.2L54.8 40.7L55.8 40.0L56.7 39.2L57.7 38.4L58.7 37.6L59.7 36.9L60.7 36.4L61.6 36.2L62.6 36.3L63.6 36.7L64.6 37.4L65.5 38.5L66.5 39.9L67.5 41.5L68.5 43.4L69.5 45.4L70.4 47.5L71.4 49.6L72.4 51.7L73.4 53.8L74.3 55.7L75.3 57.5L76.3 59.2L77.3 60.6L78.3 61.9L79.2 63.0L80.2 64.0L81.2 64.8L82.2 65.4L83.1 65.9L84.1 66.3L85.1 66.7" fill="none" stroke="rgb(62,109,225)" stroke-width="0.75"/><path d="M14.7 67.1L15.7 66.9L16.7 66.6L17.6 66.3L18.6 65.9L19.6 65.3L20.6 64.7L21.5 63.8L22.5 62.8L23.5 61.5L24.5 60.1L25.5 58.4L26.4 56.5L27.4 54.4L28.4 52.0L29.4 49.6L30.3 47.0L31.3 44.3L32.3 41.7L33.3 39.2L34.3 36.8L35.2 34.7L36.2 32.9L37.2 31.5L38.2 30.5L39.1 30.0L40.1 29.9L41.1 30.3L42.1 31.0L43.1 32.1L44.0 33.5L45.0 35.0L46.0 36.5L47.0 38.1L47.9 39.5L48.9 40.8L49.9 41.8L50.9 42.5L51.9 42.9L52.8 43.0L53.8 42.9L54.8 42.5L55.8 41.9L56.7 41.2L57.7 40.5L58.7 39.9L59.7 39.3L60.7 39.0L61.6 38.8L62.6 38.9L63.6 39.3L64.6 40.1L65.5 41.1L66.5 42.3L67.5 43.9L68.5 45.6L69.5 47.4L70.4 49.3L71.4 51.2L72.4 53.2L73.4 55.0L74.3 56.8L75.3 58.4L76.3 59.9L77.3 61.3L78.3 62.4L79.2 63.4L80.2 64.3L81.2 65.0L82.2 65.6L83.1 66.1L84.1 66.4L85.1 66.7" fill="none" stroke="rgb(77,118,221)" stroke-width="0.75"/><path d="M14.7 67.1L15.7 66.9L16.7 66.7L17.6 66.4L18.6 66.0L19.6 65.5L20.6 64.8L21.5 64.1L22.5 63.1L23.5 62.0L24.5 60.7L25.5 59.2L26.4 57.4L27.4 55.5L28.4 53.4L29.4 51.2L30.3 48.8L31.3 46.4L32.3 44.1L33.3 41.8L34.3 39.6L35.2 37.7L36.2 36.1L37.2 34.8L38.2 33.9L39.1 33.3L40.1 33.2L41.1 33.5L42.1 34.1L43.1 35.0L44.0 36.2L45.0 37.5L46.0 38.9L47.0 40.2L47.9 41.5L48.9 42.6L49.9 43.5L50.9 44.1L51.9 44.5L52.8 44.7L53.8 44.6L54.8 44.3L55.8 43.8L56.7 43.3L57.7 42.7L58.7 42.2L59.7 41.7L60.7 41.5L61.6 41.4L62.6 41.6L63.6 42.0L64.6 42.7L65.5 43.6L66.5 44.8L67.5 46.2L68.5 47.7L69.5 49.4L70.4 51.1L71.4 52.9L72.4 54.6L73.4 56.3L74.3 57.9L75.3 59.3L76.3 60.7L77.3 61.9L78.3 62.9L79.2 63.8L80.2 64.6L81.2 65.2L82.2 65.8L83.1 66.2L84.1 66.5L85.1 66.8" fill="none" stroke="rgb(92,128,216)" stroke-width="0.75"/><path d="M14.7 67.1L15.7 66.9L16.7 66.7L17.6 66.4L18.6 66.0L19.6 65.6L20.6 65.0L21.5 64.3L22.5 63.5L23.5 62.5L24.5 61.3L25.5 59.9L26.4 58.4L27.4 56.6L28.4 54.8L29.4 52.8L30.3 50.7L31.3 48.6L32.3 46.4L33.3 44.4L34.3 42.5L35.2 40.7L36.2 39.2L37.2 38.1L38.2 37.2L39.1 36.7L40.1 36.5L41.1 36.7L42.1 37.2L43.1 38.0L44.0 38.9L45.0 40.0L46.0 41.2L47.0 42.3L47.9 43.4L48.9 44.4L49.9 45.2L50.9 45.8L51.9 46.1L52.8 46.3L53.8 46.2L54.8 46.0L55.8 45.7L56.7 45.3L57.7 44.8L58.7 44.4L59.7 44.1L60.7 44.0L61.6 44.0L62.6 44.2L63.6 44.6L64.6 45.3L65.5 46.2L66.5 47.3L67.5 48.5L68.5 49.9L69.5 51.4L70.4 53.0L71.4 54.5L72.4 56.1L73.4 57.5L74.3 59.0L75.3 60.3L76.3 61.4L77.3 62.5L78.3 63.4L79.2 64.2L80.2 64.9L81.2 65.5L82.2 66.0L83.1 66.3L84.1 66.6L85.1 66.9" fill="none" stroke="rgb(106,137,212)" stroke-width="0.75"/><path d="M14.7 67.1L15.7 66.9L16.7 66.7L17.6 66.5L18.6 66.1L19.6 65.7L20.6 65.2L21.5 64.6L22.5 63.8L23.5 62.9L24.5 61.9L25.5 60.7L26.4 59.3L27.4 57.8L28.4 56.1L29.4 54.4L30.3 52.6L31.3 50.7L32.3 48.8L33.3 47.0L34.3 45.3L35.2 43.8L36.2 42.4L37.2 41.3L38.2 40.5L39.1 40.0L40.1 39.8L41.1 39.9L42.1 40.3L43.1 40.9L44.0 41.7L45.0 42.6L46.0 43.5L47.0 44.5L47.9 45.4L48.9 46.2L49.9 46.9L50.9 47.4L51.9 47.7L52.8 47.9L53.8 47.9L54.8 47.8L55.8 47.6L56.7 47.3L57.7 47.0L58.7 46.7L59.7 46.6L60.7 46.5L61.6 46.6L62.6 46.8L63.6 47.3L64.6 47.9L65.5 48.7L66.5 49.7L67.5 50.9L68.5 52.1L69.5 53.4L70.4 54.8L71.4 56.1L72.4 57.5L73.4 58.8L74.3 60.0L75.3 61.2L76.3 62.2L77.3 63.1L78.3 63.9L79.2 64.6L80.2 65.2L81.2 65.7L82.2 66.1L83.1 66.5L84.1 66.7L85.1 66.9" fill="none" stroke="rgb(121,146,207)" stroke-width="0.75"/><path d="M14.7 67.1L15.7 66.9L16.7 66.7L17.6 66.5L18.6 66.2L19.6 65.8L20.6 65.4L21.5 64.8L22.5 64.2L23.5 63.4L24.5 62.5L25.5 61.4L26.4 60.2L27.4 58.9L28.4 57.5L29.4 56.0L30.3 54.4L31.3 52.8L32.3 51.2L33.3 49.6L34.3 48.1L35.2 46.8L36.2 45.6L37.2 44.6L38.2 43.9L39.1 43.4L40.1 43.2L41.1 43.2L42.1 43.4L43.1 43.8L44.0 44.4L45.0 45.1L46.0 45.8L47.0 46.6L47.9 47.3L48.9 48.0L49.9 48.6L50.9 49.0L51.9 49.4L52.8 49.5L53.8 49.6L54.8 49.6L55.8 49.5L56.7 49.3L57.7 49.1L58.7 49.0L59.7 49.0L60.7 49.0L61.6 49.2L62.6 49.5L63.6 49.9L64.6 50.5L65.5 51.3L66.5 52.2L67.5 53.2L68.5 54.3L69.5 55.4L70.4 56.6L71.4 57.8L72.4 58.9L73.4 60.1L74.3 61.1L75.3 62.1L76.3 63.0L77.3 63.7L78.3 64.4L79.2 65.0L80.2 65.5L81.2 66.0L82.2 66.3L83.1 66.6L84.1 66.8L85.1 67.0" fill="none" stroke="rgb(136,156,203)" stroke-width="0.75"/><path d="M14.7 67.1L15.7 66.9L16.7 66.8L17.6 66.5L18.6 66.3L19.6 65.9L20.6 65.5L21.5 65.1L22.5 64.5L23.5 63.8L24.5 63.1L25.5 62.2L26.4 61.2L27.4 60.1L28.4 58.9L29.4 57.6L30.3 56.3L31.3 54.9L32.3 53.6L33.3 52.2L34.3 51.0L35.2 49.8L36.2 48.8L37.2 47.9L38.2 47.2L39.1 46.7L40.1 46.5L41.1 46.4L42.1 46.5L43.1 46.7L44.0 47.1L45.0 47.6L46.0 48.2L47.0 48.7L47.9 49.3L48.9 49.8L49.9 50.3L50.9 50.7L51.9 51.0L52.8 51.2L53.8 51.3L54.8 51.3L55.8 51.3L56.7 51.3L57.7 51.3L58.7 51.3L59.7 51.4L60.7 51.5L61.6 51.8L62.6 52.1L63.6 52.6L64.6 53.2L65.5 53.8L66.5 54.6L67.5 55.5L68.5 56.4L69.5 57.4L70.4 58.4L71.4 59.4L72.4 60.4L73.4 61.3L74.3 62.2L75.3 63.0L76.3 63.7L77.3 64.4L78.3 64.9L79.2 65.4L80.2 65.9L81.2 66.2L82.2 66.5L83.1 66.7L84.1 66.9L85.1 67.1" fill="none" stroke="rgb(150,165,198)" stroke-width="0.75"/><path d="M14.7 67.1L15.7 66.9L16.7 66.8L17.6 66.6L18.6 66.4L19.6 66.1L20.6 65.7L21.5 65.3L22.5 64.8L23.5 64.3L24.5 63.6L25.5 62.9L26.4 62.1L27.4 61.2L28.4 60.3L29.4 59.2L30.3 58.2L31.3 57.0L32.3 55.9L33.3 54.8L34.3 53.8L35.2 52.8L36.2 51.9L37.2 51.2L38.2 50.6L39.1 50.1L40.1 49.8L41.1 49.6L42.1 49.6L43.1 49.7L44.0 49.9L45.0 50.1L46.0 50.5L47.0 50.9L47.9 51.3L48.9 51.6L49.9 52.0L50.9 52.3L51.9 52.6L52.8 52.8L53.8 53.0L54.8 53.1L55.8 53.2L56.7 53.3L57.7 53.4L58.7 53.6L59.7 53.8L60.7 54.0L61.6 54.3L62.6 54.7L63.6 55.2L64.6 55.8L65.5 56.4L66.5 57.1L67.5 57.8L68.5 58.6L69.5 59.4L70.4 60.2L71.4 61.1L72.4 61.8L73.4 62.6L74.3 63.3L75.3 63.9L76.3 64.5L77.3 65.0L78.3 65.4L79.2 65.8L80.2 66.2L81.2 66.5L82.2 66.7L83.1 66.9L84.1 67.0L85.1 67.2" fill="none" stroke="rgb(165,174,194)" stroke-width="0.75"/><path d="M14.7 67.1L15.7 67.0L16.7 66.8L17.6 66.6L18.6 66.4L19.6 66.2L20.6 65.9L21.5 65.6L22.5 65.2L23.5 64.7L24.5 64.2L25.5 63.7L26.4 63.1L27.4 62.4L28.4 61.6L29.4 60.8L30.3 60.0L31.3 59.2L32.3 58.3L33.3 57.5L34.3 56.6L35.2 55.8L36.2 55.1L37.2 54.5L38.2 53.9L39.1 53.4L40.1 53.1L41.1 52.8L42.1 52.6L43.1 52.6L44.0 52.6L45.0 52.7L46.0 52.8L47.0 53.0L47.9 53.2L48.9 53.5L49.9 53.7L50.9 54.0L51.9 54.2L52.8 54.4L53.8 54.7L54.8 54.9L55.8 55.1L56.7 55.3L57.7 55.6L58.7 55.9L59.7 56.2L60.7 56.5L61.6 56.9L62.6 57.4L63.6 57.9L64.6 58.4L65.5 59.0L66.5 59.6L67.5 60.2L68.5 60.8L69.5 61.4L70.4 62.1L71.4 62.7L72.4 63.3L73.4 63.8L74.3 64.3L75.3 64.8L76.3 65.2L77.3 65.6L78.3 66.0L79.2 66.2L80.2 66.5L81.2 66.7L82.2 66.9L83.1 67.0L84.1 67.1L85.1 67.2" fill="none" stroke="rgb(180,184,190)" stroke-width="0.75"/><path d="M14.7 67.9L38.4 55.5 50 57.8 60.3 56 85.1 67.9z" fill="#fff" fill-opacity=".45" stroke="#c0c3c8" stroke-width="0.7" stroke-linejoin="round"/><path d="M26.1 68.6C36.3 70.8 61.1 70.8 71.3 68.6" fill="none" stroke="rgb(204,204,204)" stroke-width="0.45"/><path d="M26.4 68.6C36.4 72.9 61.0 72.9 71.0 68.6" fill="none" stroke="rgb(209,190,188)" stroke-width="0.45"/><path d="M26.7 68.6C36.6 75.1 60.8 75.1 70.7 68.6" fill="none" stroke="rgb(214,177,173)" stroke-width="0.45"/><path d="M27.0 68.6C36.8 77.3 60.6 77.3 70.4 68.6" fill="none" stroke="rgb(219,163,157)" stroke-width="0.45"/><path d="M27.3 68.6C36.9 79.4 60.5 79.4 70.1 68.6" fill="none" stroke="rgb(224,150,142)" stroke-width="0.45"/><path d="M27.6 68.6C37.1 81.6 60.3 81.6 69.8 68.6" fill="none" stroke="rgb(229,136,126)" stroke-width="0.45"/><path d="M27.9 68.6C37.3 83.8 60.1 83.8 69.5 68.6" fill="none" stroke="rgb(234,123,111)" stroke-width="0.45"/><path d="M28.2 68.6C37.4 85.9 60.0 85.9 69.2 68.6" fill="none" stroke="rgb(239,109,95)" stroke-width="0.45"/><path d="M28.5 68.6C37.6 88.1 59.8 88.1 68.9 68.6" fill="none" stroke="rgb(244,96,80)" stroke-width="0.45"/></svg>
<span class="t" style="left:1024.18px;top:734.09px;font-size:13.33px;color:#000;">Math</span>
<span class="t" style="left:1004.17px;top:750.09px;font-size:13.33px;color:#000;">calculations</span>
<div class="r" style="left:1121px;top:622px;width:100px;height:100px;background:#fff;box-sizing:border-box;border:1px solid #e6e6e6;"></div>
<svg class="r" style="left:1121px;top:622px;" width="100" height="100" viewBox="0 0 100 100"><path d="M58 47.6A11.6 11.6 0 0 0 34.8 48.6" fill="none" stroke="#0a50e0" stroke-width="1.6"/><path d="M28.5 49h13l-6.5 6.6z" fill="#0a50e0"/><path d="M49.5 49V46.5H58.2M60.6 46.5H63.2L65.4 44.5H72.6V64.5H70" fill="none" stroke="#2f3744" stroke-width="1" stroke-linejoin="miter"/><path d="M48 49.5H68.5M47 51.5H68" fill="none" stroke="#2f3744" stroke-width="1" shape-rendering="crispEdges"/><path d="M68.5 49.5L71.9 62.5M68 51.5L70.8 61" fill="none" stroke="#2f3744" stroke-width="0.7"/><path d="M46.4 53.5H68L71.6 64.5H49.6Z" fill="#fff" stroke="#2f3744" stroke-width="1.1" stroke-linejoin="miter"/></svg>
<span class="t" style="left:1129.63px;top:734.09px;font-size:13.33px;color:#000;">View previous</span>
<span class="t" style="left:1151.37px;top:750.09px;font-size:13.33px;color:#000;">results</span>
</body></html>
